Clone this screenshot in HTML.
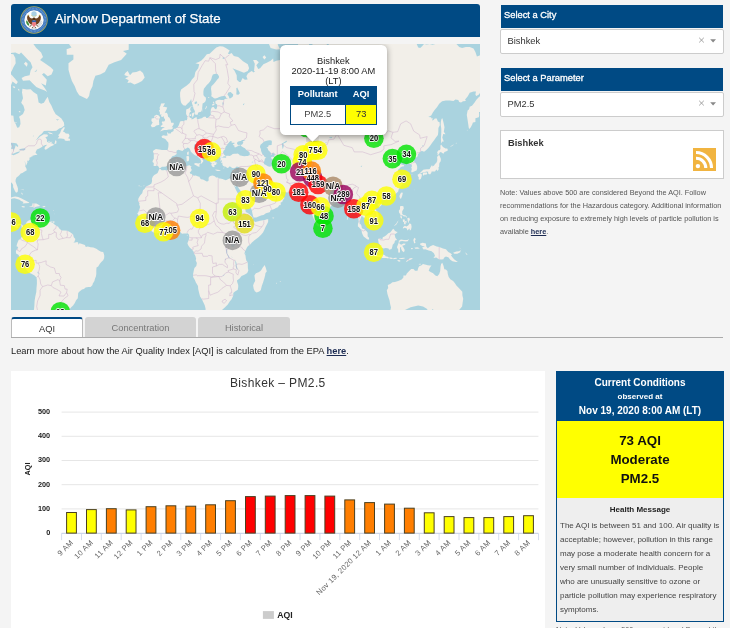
<!DOCTYPE html>
<html>
<head>
<meta charset="utf-8">
<title>AirNow Department of State</title>
<style>
html,body{margin:0;padding:0;}
body{width:730px;height:628px;overflow:hidden;background:#f4f4f4;font-family:"Liberation Sans",sans-serif;color:#333;position:relative;}
.abs{position:absolute;}
#hdr{left:11px;top:4px;width:469px;height:33px;background:#004a84;border-radius:3px 3px 0 0;}
#hdr .t{position:absolute;left:43.7px;top:6.6px;font-size:13.33px;color:#fff;white-space:nowrap;-webkit-text-stroke:0.25px #fff;}
#map{left:11px;top:44px;width:469px;height:266px;background:#aad3df;overflow:hidden;}
.bar{left:500.7px;width:222.7px;height:23.2px;background:#004a84;color:#fff;font-size:9.33px;line-height:21.6px;text-indent:3.3px;-webkit-text-stroke:0.3px #fff;}
.sel{left:500px;width:221.5px;height:22.5px;background:#fff;border:1px solid #ccc;border-radius:2px;font-size:9.33px;line-height:23px;color:#333;}
.sel span{position:absolute;left:6.5px;}
.sel svg{position:absolute;left:197px;top:7px;}
#citybox{left:500px;top:130px;width:221.5px;height:46.5px;background:#fff;border:1px solid #ccc;}
#citybox b{position:absolute;left:7px;top:7px;font-size:9.3px;}
#note{left:500px;top:186px;width:228px;font-size:7.3px;line-height:13px;color:#555;}
.pt{font-size:9.33px;text-align:center;white-space:nowrap;}
#tabs .tab{position:absolute;top:317px;height:20px;font-size:9.3px;line-height:20px;text-align:center;border-radius:3px 3px 0 0;}
#tabline{left:11px;top:337px;width:712px;height:1px;background:#aaa;}
#learn{left:11px;top:345.7px;font-size:9.3px;white-space:nowrap;color:#222;}
#chart{left:11px;top:371px;width:534px;height:257px;background:#fff;}
#cond{left:556px;top:371px;width:166px;height:250px;border:1px solid #004a84;border-top:none;background:#eee;}
#cond .ch{position:absolute;left:0;top:0;width:166px;height:50px;background:#004a84;color:#fff;font-weight:bold;text-align:center;}
#cond .ch div,#cond .cy div{position:absolute;left:0;width:100%;white-space:nowrap;}
#cond .cy{position:absolute;left:0;top:50px;width:166px;height:76.5px;background:#ffff00;color:#111;font-weight:bold;text-align:center;font-size:13.33px;}
#cond .hm{position:absolute;left:0;top:133.6px;width:166px;text-align:center;font-weight:bold;font-size:8px;color:#222;}
#cond .ht{position:absolute;left:3px;top:147.5px;font-size:8px;line-height:14px;color:#444;white-space:nowrap;}
</style>
</head>
<body><div id="wrap" style="position:absolute;left:0;top:0;width:730px;height:628px;overflow:hidden;will-change:transform;">
<div id="hdr" class="abs"><svg class="abs" style="left:8.2px;top:1.4px" width="30" height="30" viewBox="-15 -15 30 30">
<defs><filter id="sb"><feGaussianBlur stdDeviation="0.3"/></filter></defs>
<g filter="url(#sb)">
<circle r="13.7" fill="#a6a860"/>
<circle r="12.9" fill="#3b74bc"/>
<circle r="12.8" fill="none" stroke="#6fa0d8" stroke-width="2.2" stroke-dasharray="0.7 0.9" transform="scale(0.88)"/>
<circle r="9.7" fill="#fdfdfb"/>
<circle cx="0" cy="-6.1" r="2.7" fill="#a9cfe2"/>
<path d="M-1.2 -3.4 L-2.6 -5 M1.2 -3.4 L2.6 -5 M0 -3 L0 -4" stroke="#d8d080" stroke-width="0.7"/>
<path d="M-1 -1.5 C-3.5 -1 -4.8 -3 -5.6 -5.2 C-7.2 -4.2 -7.4 -1 -5.8 1.6 C-5 3 -3.8 4.2 -2.4 4.8 L-1.2 2 Z" fill="#6e4320"/>
<path d="M1 -1.5 C3.5 -1 4.8 -3 5.6 -5.2 C7.2 -4.2 7.4 -1 5.8 1.6 C5 3 3.8 4.2 2.4 4.8 L1.2 2 Z" fill="#6e4320"/>
<path d="M-5.4 -5.6 L-4.6 -4 L-6 -4.2 Z M5.4 -5.6 L4.6 -4 L6 -4.2 Z" fill="#c9b43c"/>
<path d="M-1.4 -1.6 C-1 -2.8 1 -2.8 1.4 -1.6 L1.6 0.6 L-1.6 0.6 Z" fill="#5a3618"/>
<path d="M-2.1 0.4 H2.1 V2.4 H-2.1 Z" fill="#2d5fa8"/>
<path d="M-2.1 2.2 H2.1 V4 C2.1 5.6 0.8 6.4 0 6.9 C-0.8 6.4 -2.1 5.6 -2.1 4 Z" fill="#ee7c82"/>
<path d="M-2.3 5 L-4.4 6.6 M2.3 5 L4.4 6.6 M-1 6.8 L-1.6 8.2 M1 6.8 L1.6 8.2" stroke="#5a3618" stroke-width="0.9"/>
<path d="M-7.6 0.2 C-8.4 2.4 -7.4 4.8 -4.8 6 C-4.6 4 -5.8 1.6 -7.6 0.2 Z" fill="#3f8f3a"/>
<path d="M4.6 6.2 L7.6 1.2 M5.4 6.6 L8.2 2.6 M4 5.6 L6.6 0.6" stroke="#b9b9b9" stroke-width="0.6"/>
<path d="M-3 7.4 C-1.5 8.6 1.5 8.6 3 7.4 L2.6 8.6 C1.2 9.4 -1.2 9.4 -2.6 8.6 Z" fill="#cfcfcf"/>
</g></svg><div class="t">AirNow Department of State</div></div>
<div id="map" class="abs"><svg class="abs" style="left:0;top:0" width="469" height="266" viewBox="0 0 469 266">
<rect width="469" height="266" fill="#aad3df"/>
<g filter="url(#mb)">
<path d="M148.9 124.4L148.2 125.3L146.6 129.1L145.1 130.0L143.2 130.9L141.9 132.5L140.9 134.7L141.1 136.9L140.4 139.4L138.3 140.9L135.0 142.6L133.9 144.5L132.0 146.3L131.2 149.2L129.1 151.5L127.4 154.6L127.1 157.3L128.5 159.1L128.2 160.5L129.1 163.1L128.2 166.1L127.2 168.5L126.3 169.6L127.6 171.5L127.6 173.8L128.7 175.0L130.6 176.9L131.6 177.9L133.5 179.8L134.5 181.7L135.8 183.7L137.7 184.8L139.4 186.2L141.9 187.9L144.9 189.6L148.2 188.7L152.0 188.0L154.3 188.5L155.8 188.9L158.5 187.9L161.5 186.7L164.4 185.9L167.2 185.8L168.4 186.5L169.7 188.5L171.0 189.8L172.9 189.6L175.4 189.4L176.6 189.2L177.9 190.6L178.3 192.7L177.9 195.5L177.3 197.0L176.4 199.3L177.3 201.6L178.7 203.5L180.9 205.6L182.5 207.5L183.0 209.5L184.4 211.9L185.1 214.8L184.7 216.4L185.9 219.1L185.3 222.0L183.4 224.0L182.8 226.5L182.1 229.9L182.1 232.9L183.6 235.5L184.9 238.5L187.0 242.0L187.2 245.1L188.2 249.3L189.1 252.5L190.8 254.9L192.2 258.0L193.7 261.3L194.5 264.2L194.7 267.2L196.9 268.8L200.6 267.9L204.4 266.9L208.4 266.9L211.0 266.0L213.5 263.8L216.8 260.6L218.7 257.5L220.6 255.3L222.3 251.5L222.3 249.1L224.0 247.6L226.8 245.7L227.2 243.0L227.2 241.0L226.3 238.3L225.9 236.5L228.6 234.5L230.5 232.1L233.9 230.5L236.2 228.9L237.3 226.5L236.9 224.0L236.8 220.1L236.6 218.1L235.4 216.8L234.8 214.3L234.5 211.4L233.5 209.8L233.9 207.5L235.0 205.6L236.2 203.1L237.7 201.6L238.8 200.9L240.9 198.6L243.8 195.9L247.2 193.4L250.1 190.8L252.0 188.5L253.5 185.6L254.5 183.1L256.0 180.2L257.1 177.9L257.2 175.3L255.8 175.2L253.9 176.1L252.0 176.3L249.1 176.7L246.3 177.5L244.4 178.1L242.5 176.9L241.9 175.7L242.1 174.2L240.8 172.4L238.3 170.1L236.2 168.7L234.8 167.9L234.3 165.1L232.9 163.1L231.2 161.7L230.5 159.1L230.3 156.7L229.9 155.0L227.8 151.7L227.0 149.8L225.5 147.1L224.4 144.8L223.6 142.8L222.3 140.5L221.6 138.2L222.1 139.4L223.0 141.3L224.8 142.9L225.3 141.3L226.2 139.1L225.9 141.3L226.7 142.6L228.2 145.0L229.7 147.1L230.8 149.8L232.8 151.9L233.9 154.0L234.1 156.0L235.2 158.1L237.1 159.9L238.5 162.1L239.8 164.1L240.9 166.5L241.3 169.1L242.1 172.0L242.5 173.6L244.4 173.6L245.3 173.4L248.2 172.2L250.7 171.3L252.6 171.1L254.9 169.3L257.7 168.5L259.0 167.9L259.2 166.5L261.1 165.7L263.4 165.1L264.9 164.1L266.9 163.3L268.2 161.3L269.7 161.1L269.7 158.5L271.2 158.1L272.0 156.0L273.5 154.1L272.4 153.0L271.2 151.7L268.6 150.9L267.4 149.6L266.9 147.5L267.0 146.0L266.5 146.7L266.1 147.5L264.4 148.8L263.4 150.4L261.7 150.7L259.6 150.5L258.1 150.7L257.3 149.6L257.9 148.2L257.8 146.9L257.1 146.4L256.4 147.7L256.5 149.2L255.8 148.4L255.2 147.1L254.9 145.2L253.3 143.5L252.4 142.0L251.4 140.2L250.8 139.4L251.2 138.3L252.8 137.4L254.1 138.0L255.2 138.3L256.2 140.0L257.5 142.6L259.8 143.7L261.5 145.2L263.4 145.5L265.3 144.8L267.0 144.2L268.2 145.0L268.6 146.9L269.7 147.4L272.0 147.9L274.9 148.2L276.9 148.5L278.5 148.5L280.6 148.3L282.7 148.4L284.8 147.9L286.3 147.8L286.9 149.2L288.0 150.9L288.9 151.5L289.5 151.7L290.9 153.2L292.6 153.2L293.7 153.1L292.6 154.0L291.0 154.3L291.2 155.2L292.9 157.1L294.7 157.7L296.4 157.3L297.1 156.3L297.5 154.6L298.1 155.8L298.1 158.1L298.3 161.1L298.7 163.5L299.4 166.7L300.4 169.1L301.3 171.1L302.2 173.4L303.2 175.7L304.2 177.5L305.0 179.6L305.5 181.0L306.5 182.1L307.3 182.6L308.4 181.7L308.6 180.9L310.1 180.2L310.5 180.2L310.0 179.6L310.9 178.3L311.7 178.2L311.7 175.9L312.6 172.8L312.2 170.7L312.1 168.3L313.3 167.5L314.3 167.3L316.4 166.0L318.3 163.7L320.2 161.9L321.7 160.3L323.4 159.4L325.0 158.3L325.3 156.5L326.9 155.7L327.8 155.8L329.3 155.6L331.0 155.3L332.2 154.2L333.7 153.8L334.6 154.4L335.1 156.7L336.0 158.5L337.5 160.1L338.7 161.4L339.4 163.5L339.2 166.9L340.4 167.5L341.5 167.6L342.9 166.5L344.2 165.2L345.1 166.1L345.7 167.9L346.1 169.9L346.6 172.2L347.5 175.0L347.7 177.5L347.2 179.0L346.9 181.0L346.9 182.5L347.7 182.9L348.8 184.2L350.0 185.6L350.7 186.9L350.9 188.7L351.6 190.6L352.6 192.5L354.3 193.8L355.8 195.0L356.8 195.6L358.1 195.4L358.0 193.8L356.7 192.5L356.6 190.4L356.7 188.8L355.6 187.3L354.3 186.2L353.1 184.9L351.8 184.8L350.9 184.1L350.5 181.9L349.9 180.2L348.7 180.2L348.6 178.1L349.2 176.3L350.0 174.0L350.1 172.4L351.2 172.0L352.0 173.2L353.3 173.7L354.5 174.8L355.6 175.6L356.0 177.1L357.0 177.9L358.5 178.1L359.4 179.0L359.2 181.6L360.2 181.2L361.9 180.0L363.1 178.1L364.0 178.0L365.3 177.4L367.1 176.3L367.7 174.4L367.8 172.0L367.3 169.5L366.9 168.3L365.8 166.9L364.4 165.5L362.9 164.1L362.3 162.7L361.1 161.5L361.1 159.9L362.5 158.5L363.2 157.5L364.8 156.5L366.1 155.8L368.2 155.8L368.8 157.1L368.6 158.5L369.9 158.5L370.1 157.3L369.7 156.5L371.1 156.0L373.0 155.4L374.9 154.8L376.0 153.8L377.2 154.4L378.3 153.6L379.8 153.4L381.5 152.5L383.1 151.5L384.6 149.8L385.9 148.8L387.2 147.5L387.6 145.4L388.8 143.7L389.9 142.0L391.2 140.5L391.8 138.5L390.9 137.6L389.5 137.4L390.7 136.5L391.8 135.8L391.4 134.3L390.1 133.1L389.7 131.3L388.8 128.8L386.9 127.2L387.1 125.8L388.6 124.4L389.7 123.2L391.2 122.5L393.0 122.3L393.2 121.2L391.2 120.8L389.7 120.1L388.2 121.1L386.7 121.7L386.1 120.4L384.4 119.1L383.6 117.7L384.0 116.7L386.1 116.7L387.1 115.2L389.0 113.7L390.5 112.5L392.2 113.2L391.4 115.0L390.9 116.5L390.5 117.7L391.8 117.2L394.3 115.5L396.2 115.1L397.2 115.7L398.3 116.5L398.1 118.2L397.3 119.4L399.1 120.1L400.6 120.6L401.0 122.3L400.2 123.2L400.8 125.1L400.2 127.4L400.8 128.4L402.5 127.7L404.2 127.0L405.5 126.4L406.2 124.4L406.1 122.0L405.3 120.1L404.2 118.4L402.7 116.7L402.5 115.5L403.4 114.7L405.2 113.5L406.7 112.2L406.9 110.2L408.2 108.9L409.0 108.1L410.9 106.8L412.2 107.5L413.5 107.6L415.3 106.1L417.3 103.9L419.1 101.8L421.0 99.1L423.1 96.3L425.0 93.5L426.9 90.9L427.3 87.7L427.4 84.1L428.8 81.3L428.6 78.2L426.9 77.5L425.7 74.6L423.8 74.6L422.5 75.9L421.0 76.6L421.9 74.3L420.6 74.6L420.0 73.3L417.3 73.0L420.2 71.4L421.7 68.7L423.6 65.9L426.3 62.7L428.2 59.8L431.1 57.3L434.9 56.5L438.7 56.5L442.5 56.9L444.4 55.4L447.3 56.1L448.2 58.0L450.1 58.4L452.0 57.3L454.9 56.9L454.1 55.4L456.8 52.3L458.7 48.8L462.5 47.6L465.0 47.6L464.4 50.4L465.2 51.9L467.6 50.8L470.7 46.8L472.0 44.3L473.9 44.8L470.5 48.8L470.9 51.2L468.2 52.7L465.4 55.8L463.6 58.4L461.0 61.7L458.7 62.7L458.1 65.2L456.6 66.6L455.8 71.0L456.6 75.9L457.2 80.1L457.7 83.5L458.2 85.1L459.8 83.2L461.2 80.4L461.9 78.5L464.4 77.9L464.4 74.3L467.8 73.3L468.2 71.4L468.0 68.0L470.5 68.0L469.7 65.2L470.5 62.4L469.2 61.7L471.1 58.0L473.9 54.3L479.6 52.3L487.3 50.4L498.7 42.3L521.5 33.6L521.5 14.0L494.9 9.7L483.5 8.6L479.6 10.8L472.0 10.2L467.3 11.9L465.9 12.4L464.4 8.0L462.5 4.6L458.7 2.9L454.9 2.9L451.1 4.0L448.2 2.9L445.9 0.5L443.4 -1.9L439.6 -5.0L432.0 -6.3L427.4 -8.8L425.9 -4.4L424.4 -0.1L421.5 0.8L418.7 -0.1L415.8 0.5L413.0 -0.1L411.1 2.3L409.2 4.0L407.2 3.5L405.7 -0.1L404.4 -4.4L401.5 -9.5L397.7 -12.8L378.7 -14.1L374.9 -16.2L359.6 -43.4L346.3 -30.9L327.2 -25.5L313.9 -12.8L317.7 -3.1L317.7 5.8L314.9 -1.9L308.2 -5.0L302.5 -6.3L301.5 -0.1L300.0 11.3L300.2 20.2L297.7 26.1L295.8 25.2L298.3 16.7L297.9 5.8L298.3 -6.3L292.0 -9.5L287.2 -1.9L286.9 4.0L287.8 10.8L286.7 14.0L289.7 17.7L283.4 13.0L281.9 11.3L275.8 9.1L274.3 12.4L274.3 15.6L272.0 14.6L269.1 16.1L265.3 16.7L262.5 17.9L262.1 14.6L259.6 16.7L255.8 18.7L252.4 20.2L249.1 24.2L247.2 24.9L245.3 21.2L247.8 18.2L245.3 16.1L242.1 15.9L243.8 19.7L243.0 27.1L244.0 27.3L242.8 28.5L240.6 27.1L236.9 29.4L235.4 32.2L236.6 35.4L233.9 35.8L231.6 34.0L229.5 38.2L232.0 38.0L228.2 38.0L225.9 35.8L225.7 31.3L223.4 26.6L221.5 24.2L225.9 26.1L232.9 28.7L236.8 26.9L238.1 24.2L236.8 20.2L232.0 17.2L227.2 13.0L222.8 11.9L220.6 9.1L218.7 10.0L216.8 9.7L218.7 6.6L214.8 4.0L212.0 2.6L208.7 2.3L205.3 3.5L201.5 6.9L198.7 9.7L195.8 10.2L192.9 14.0L190.1 16.7L187.2 18.2L184.4 19.2L188.2 20.2L187.2 24.2L184.4 28.0L183.4 32.7L180.9 35.4L178.7 38.9L175.8 41.4L172.9 43.5L170.1 45.6L169.1 48.4L169.1 52.3L169.7 56.9L170.3 59.1L172.2 61.3L174.5 61.7L176.4 59.8L178.3 58.0L179.8 56.1L180.0 54.6L180.6 57.6L181.1 59.8L182.1 62.4L179.8 62.6L177.7 64.5L175.2 65.6L175.1 70.0L176.0 71.7L176.4 74.3L175.8 76.3L173.9 76.3L172.9 77.2L171.0 77.1L169.1 77.5L168.6 79.1L167.8 81.3L166.5 83.5L164.4 84.5L162.6 85.0L162.6 87.1L160.0 88.6L159.8 89.5L157.3 89.5L156.9 88.6L156.0 88.6L156.6 91.5L154.5 91.8L152.7 91.2L150.6 92.1L151.0 93.8L153.3 94.6L154.8 95.5L155.8 96.9L157.3 98.5L157.5 100.4L157.3 102.9L156.7 105.8L156.2 106.1L153.9 106.1L151.0 106.1L148.2 105.5L144.9 105.1L142.5 106.6L141.9 107.4L142.8 109.4L142.8 112.2L142.8 114.7L141.7 116.7L141.5 117.9L142.8 118.9L142.6 122.0L144.6 122.0L146.3 121.6L147.4 122.5L148.2 123.9L148.9 124.4ZM-30.9 54.3L-30.9 19.2L-27.1 19.2L-24.2 22.2L-22.7 18.2L-20.0 12.4L-23.3 5.8L-21.4 -1.9L-17.6 1.7L-15.7 8.6L-14.7 11.3L-12.8 16.7L-10.9 14.0L-8.0 18.2L-7.1 22.2L-4.2 19.7L-3.3 13.0L-1.4 9.7L2.4 10.2L4.3 14.0L4.7 19.2L2.4 23.2L0.5 27.6L-3.8 29.0L-5.8 31.3L-7.1 35.8L-11.8 38.4L-16.6 44.3L-19.5 50.4L-20.8 54.3L-20.0 59.1L-17.6 59.1L-16.6 64.1L-11.8 65.2L-8.0 67.6L-3.3 70.7L2.4 71.7L3.0 76.9L4.7 80.1L6.2 83.8L8.2 83.2L9.5 80.1L9.1 75.3L8.0 72.7L12.0 70.0L13.7 65.9L12.5 61.7L10.2 58.7L12.0 54.3L11.0 48.4L11.4 44.8L15.8 45.4L19.6 45.2L22.4 48.0L26.2 50.4L27.2 56.1L27.6 58.4L30.1 59.8L32.9 58.7L34.8 55.4L36.7 52.7L38.3 58.0L40.5 61.7L42.4 66.2L44.7 70.3L48.2 72.7L50.4 74.6L52.9 78.5L53.3 81.6L51.0 83.5L48.2 84.4L45.3 86.8L41.5 86.9L36.7 86.8L32.9 87.1L31.0 89.5L28.2 91.8L25.3 95.8L24.0 96.7L26.2 95.5L29.1 92.4L32.9 90.3L36.3 90.6L37.1 92.1L34.3 93.5L35.8 94.9L36.0 97.7L38.1 98.8L41.5 99.6L42.6 100.4L45.3 99.4L45.5 96.9L44.3 96.3L43.4 100.4L42.4 101.3L39.6 102.6L36.7 104.5L34.8 105.8L33.5 105.0L33.9 102.9L36.2 100.7L34.3 101.0L32.0 102.1L30.1 103.4L28.2 104.5L25.9 105.5L24.9 107.4L24.5 108.9L26.2 110.2L26.2 110.7L24.3 111.0L22.4 111.5L19.6 112.4L22.4 112.5L19.6 113.2L18.4 113.7L18.6 115.5L17.1 117.2L16.0 116.2L16.5 118.2L15.8 120.1L14.8 122.0L14.2 118.4L13.7 116.7L14.1 119.9L14.2 122.3L15.4 124.4L15.8 126.2L13.7 127.4L11.4 129.1L9.7 129.5L8.5 131.1L7.2 132.2L5.5 133.6L4.7 135.4L4.5 137.2L5.3 139.8L6.2 142.0L7.0 144.8L6.8 147.5L5.9 148.5L4.9 148.4L3.8 146.7L3.0 145.0L2.1 143.0L2.1 140.7L0.9 139.1L-0.4 137.9L-2.3 138.8L-4.2 137.4L-7.1 137.4L-9.0 137.4L-10.9 137.8L-10.7 139.8L-12.8 139.8L-15.7 138.9L-19.5 138.9L-22.3 140.7L-25.2 142.8L-25.8 146.7L-26.7 150.9L-26.7 154.4L-25.6 157.5L-23.9 160.3L-21.4 161.9L-19.5 162.5L-16.6 161.9L-14.3 161.7L-13.0 159.5L-12.6 157.1L-9.9 156.3L-7.1 156.0L-5.8 156.5L-6.9 158.7L-7.3 161.1L-8.0 162.3L-8.4 164.1L-9.2 166.5L-9.4 167.5L-7.7 167.4L-5.2 167.5L-3.3 167.3L-1.4 167.5L0.5 168.5L1.1 169.3L0.7 171.1L0.4 173.4L0.1 175.9L0.3 177.3L1.3 178.9L2.8 180.2L4.3 181.2L5.9 180.8L7.8 179.7L9.5 180.0L11.4 181.2L12.2 181.5L13.1 182.5L13.3 181.4L14.8 180.2L15.6 178.3L16.9 176.9L18.2 176.3L20.5 175.9L22.1 175.2L23.6 174.2L24.0 175.4L22.6 176.5L23.2 177.9L24.0 177.1L25.9 175.9L26.2 174.7L27.0 175.9L29.1 177.1L29.7 177.9L32.9 177.7L35.8 178.7L37.7 178.0L40.5 177.5L41.7 177.5L40.2 178.5L42.3 179.2L43.8 180.8L45.3 181.7L47.2 182.7L48.3 184.6L50.6 186.5L53.3 186.6L56.3 186.8L58.8 188.1L60.9 189.4L62.1 190.4L62.8 193.2L64.3 195.0L63.6 197.4L62.4 198.4L64.0 198.6L66.3 198.0L67.2 198.8L67.4 200.7L68.5 199.2L71.0 199.9L73.9 200.9L74.8 203.0L76.7 202.6L79.6 203.3L82.4 203.4L85.3 204.7L88.2 206.8L90.1 207.7L92.2 207.9L92.9 210.0L93.3 211.8L93.1 214.3L92.2 216.2L90.3 218.1L88.7 220.1L87.2 222.4L85.5 223.6L85.3 226.5L85.3 229.9L84.9 232.5L84.0 234.5L83.4 236.9L81.7 239.7L81.5 241.0L79.6 242.9L77.3 243.0L74.6 243.5L72.9 244.9L71.0 245.5L68.5 247.4L67.2 249.1L67.0 251.5L66.8 254.2L65.1 256.2L63.8 259.1L62.1 261.5L60.2 263.3L57.9 266.3L55.8 268.8L52.5 269.0L49.5 267.9L48.2 268.1L51.0 272.3L49.7 276.9L41.5 278.8L35.8 283.8L30.1 308.3L16.7 314.4L18.6 294.2L19.6 281.3L20.2 274.4L21.3 270.4L23.0 265.6L23.4 261.3L23.6 256.9L24.3 252.5L25.3 248.1L25.5 244.1L25.9 240.0L25.9 236.1L25.5 233.5L23.6 231.5L20.9 230.1L17.7 228.5L15.6 226.3L14.2 224.5L12.7 221.2L11.4 218.7L10.1 215.8L8.5 212.9L7.4 210.8L5.1 209.5L4.9 207.0L6.4 204.7L7.2 203.0L5.5 202.2L6.1 199.7L7.0 197.6L7.6 196.1L9.5 195.0L10.4 193.2L12.0 193.0L12.5 190.8L12.2 188.5L12.2 185.6L11.2 184.2L10.4 182.9L10.8 181.9L10.1 181.0L8.2 181.0L6.8 182.3L7.2 183.8L5.7 184.2L4.2 183.1L2.2 182.3L0.5 181.7L0.2 180.6L-1.8 179.6L-2.9 178.9L-3.8 177.1L-5.6 175.0L-7.1 173.0L-9.0 172.6L-11.8 171.6L-15.7 170.1L-19.5 166.7L-23.3 167.7L-30.9 165.1ZM76.0 55.0L72.9 53.5L68.2 51.2L65.7 47.2L63.8 42.3L60.9 37.1L59.0 31.3L57.5 25.7L57.5 19.2L62.4 15.6L62.4 10.8L55.8 10.8L55.6 5.2L60.5 3.5L55.8 -3.1L52.9 -12.8L49.1 -27.0L102.4 -67.9L125.3 -30.9L118.6 -16.2L117.7 -5.0L112.9 -4.4L117.7 -0.1L117.7 5.8L112.0 6.9L115.8 9.7L110.1 16.1L103.4 18.2L97.7 20.7L93.9 28.0L89.1 30.4L84.4 31.8L82.4 37.1L81.5 42.3L79.0 47.2L78.1 51.9ZM36.2 48.0L33.9 46.4L29.1 44.8L25.3 43.1L21.5 39.3L18.6 36.2L12.0 36.7L10.6 34.0L13.9 32.2L18.6 31.3L19.6 26.6L21.5 23.2L19.6 18.2L16.7 15.6L13.9 12.4L10.1 8.6L8.2 10.2L4.3 8.6L-0.4 9.1L-3.3 8.6L-7.1 6.9L-10.9 1.7L-9.9 -9.5L-2.3 -14.8L5.3 -12.8L11.0 -9.5L14.8 -6.3L17.7 -1.9L22.4 -0.1L25.3 4.0L30.1 8.6L32.0 13.0L29.1 16.1L33.9 19.2L39.6 23.2L42.4 26.1L40.5 30.4L36.7 32.2L32.9 29.0L31.0 30.4L35.8 35.8L34.8 41.4L30.1 39.3L33.9 44.3ZM376.8 241.0L377.2 244.1L375.8 246.2L376.4 249.7L377.2 252.5L378.5 256.2L379.2 260.2L380.0 263.5L379.1 267.4L384.4 269.3L392.0 266.9L399.6 263.3L407.2 261.5L412.0 262.4L415.8 264.7L418.3 268.8L422.1 264.7L422.5 270.4L426.3 275.2L437.7 278.8L447.3 266.9L451.1 262.4L452.2 254.7L451.4 251.5L451.3 247.8L448.8 245.1L446.9 243.0L445.4 241.4L443.8 238.9L442.1 236.9L439.3 235.3L437.7 232.9L436.8 229.9L436.4 226.9L434.9 225.5L433.3 225.3L432.6 222.0L431.3 218.7L430.1 220.1L429.5 223.0L429.2 226.9L428.2 229.9L426.3 232.3L424.4 231.5L422.1 229.3L419.6 227.9L417.7 226.7L418.7 224.0L420.4 221.6L418.7 221.6L416.8 221.2L413.9 220.6L412.0 219.9L410.1 221.4L408.2 222.2L407.2 224.0L406.5 226.7L404.0 226.7L402.5 224.9L400.2 225.1L397.7 227.5L395.8 229.5L394.9 231.5L392.4 231.5L392.4 233.5L390.7 235.5L387.2 236.9L384.0 238.1L381.5 238.3L379.2 240.0Z" fill="#f2efe9"/>
<path d="M148.4 124.6L149.4 124.1L151.0 122.7L152.9 122.7L155.4 122.6L156.4 121.3L158.3 120.6L159.0 118.7L160.0 117.7L159.0 116.0L160.2 113.7L161.3 112.2L163.6 111.5L165.7 109.9L165.5 108.4L165.5 106.8L167.2 105.8L169.1 106.2L171.4 107.0L173.3 105.3L175.2 104.5L176.6 103.4L178.3 104.2L179.2 105.8L179.8 107.4L180.9 108.7L182.1 109.7L183.2 110.7L184.4 111.6L185.9 111.7L186.8 112.7L188.0 114.0L189.3 114.7L189.7 116.0L190.3 117.7L189.7 119.1L189.4 119.8L190.3 119.8L191.2 118.7L192.2 117.4L192.2 116.2L191.2 115.5L191.8 113.7L193.7 114.0L193.9 115.0L194.7 115.2L194.8 114.0L193.9 113.1L192.0 112.0L190.1 111.0L190.1 109.8L188.4 109.9L187.2 108.9L186.3 107.6L185.5 105.8L184.4 104.7L183.2 103.9L183.0 101.8L183.2 100.7L184.6 99.9L185.7 99.9L185.5 101.5L186.1 102.3L186.8 101.0L188.0 101.8L188.6 103.7L190.1 105.8L192.0 106.8L193.3 107.6L194.8 108.7L196.0 109.7L196.7 111.0L196.6 113.2L197.5 115.2L198.7 117.0L199.8 118.7L201.1 118.9L203.2 119.6L203.2 119.9L201.1 119.1L200.2 120.1L200.7 121.8L201.3 122.5L202.3 123.2L203.0 123.0L203.6 123.2L203.2 121.3L204.4 121.0L205.3 120.4L205.3 119.1L204.2 118.4L203.2 116.5L203.0 114.7L204.0 114.2L205.1 114.9L206.1 114.2L204.9 113.0L206.8 112.6L209.1 112.7L209.5 114.0L210.5 113.7L211.6 113.6L214.7 113.7L215.4 112.9L214.8 112.2L212.9 112.2L211.8 113.0L210.5 113.5L209.5 114.6L209.5 116.0L210.7 116.2L210.7 117.7L209.9 118.9L211.4 118.7L211.4 120.4L212.0 121.8L213.3 122.5L215.0 122.7L216.0 123.9L217.5 123.7L218.1 122.4L219.6 122.7L221.1 123.9L222.5 124.2L224.4 123.7L225.7 122.5L227.4 123.0L228.6 122.7L228.0 124.4L228.0 126.3L228.0 127.9L227.2 129.3L226.5 131.3L226.1 133.1L225.3 134.7L224.8 135.2L223.4 135.6L221.5 135.6L220.9 135.2L220.0 134.7L218.7 134.5L217.3 134.9L216.0 135.8L214.8 136.2L212.7 135.6L211.6 134.9L209.1 134.5L207.6 134.5L207.0 133.6L205.1 133.4L203.8 132.2L201.7 131.5L200.2 131.8L198.8 132.2L197.7 133.6L197.5 135.4L197.9 136.1L196.9 137.2L195.8 137.4L193.9 136.5L192.0 135.6L190.1 135.2L188.9 134.0L188.6 132.7L187.2 132.5L184.7 131.6L183.0 131.7L181.5 131.0L180.6 130.0L179.0 129.5L178.8 128.4L180.4 126.7L180.7 125.6L180.0 124.4L179.8 123.2L180.7 122.0L179.6 122.2L179.0 121.4L178.3 121.2L176.7 121.8L174.8 122.3L172.9 122.0L171.4 122.0L169.5 122.7L167.2 122.3L165.3 122.5L163.4 123.0L161.5 123.2L159.6 124.6L157.7 125.1L155.8 126.5L153.9 126.0L152.2 126.3L150.6 126.3L149.5 125.1L148.4 125.0ZM214.8 112.0L213.1 110.7L212.9 109.7L212.0 108.4L212.7 106.6L214.1 105.8L214.1 104.5L214.7 102.6L216.2 101.3L216.2 100.2L217.1 99.4L218.3 98.0L219.6 97.1L220.6 97.4L221.3 97.7L220.4 98.3L220.9 98.8L223.4 98.8L223.6 99.4L222.1 100.2L221.7 101.0L223.4 101.5L223.4 103.0L224.0 103.4L225.1 103.0L226.7 102.2L227.0 101.7L228.9 101.5L229.3 100.7L227.2 100.9L226.3 100.2L225.9 99.1L226.8 97.7L228.2 97.3L229.7 97.0L231.2 96.0L232.6 95.9L234.5 95.8L234.1 96.3L232.6 97.1L231.6 97.4L232.4 98.8L231.8 99.4L231.2 100.4L229.7 101.0L229.7 101.5L230.8 102.6L232.4 103.4L233.9 104.2L235.2 105.8L236.4 106.8L237.7 107.4L238.7 108.7L238.8 109.9L238.7 111.0L236.8 112.0L235.2 112.1L233.5 112.2L231.6 112.0L229.9 111.5L228.9 111.5L228.2 110.4L226.7 109.6L225.3 109.8L223.4 109.7L221.7 110.1L220.2 111.2L218.7 112.0L217.1 111.7L216.0 111.7ZM252.9 97.7L251.0 99.4L249.5 100.7L248.9 102.9L249.9 105.0L250.1 107.1L251.2 109.7L252.6 111.2L253.7 113.0L255.4 113.7L253.9 114.5L253.5 116.5L252.9 118.2L252.9 120.1L254.9 121.1L256.8 122.3L258.7 122.7L260.6 122.3L262.3 122.3L262.4 121.1L262.1 119.6L262.1 117.2L261.1 116.2L261.7 115.0L260.4 114.7L260.2 113.0L261.1 112.7L262.5 113.0L263.4 112.2L262.5 110.7L260.4 110.7L259.6 111.2L260.2 109.2L258.7 107.4L257.3 106.3L256.6 104.2L255.4 103.5L257.1 102.9L257.7 101.3L260.6 101.0L260.9 97.7L260.4 96.5L258.5 96.3L256.8 96.6L254.9 97.1ZM260.6 109.9L261.3 111.7L263.2 112.0L264.0 110.7L262.9 109.2L261.3 109.2ZM180.0 62.7L182.1 62.6L182.5 64.5L183.6 66.6L184.0 68.0L183.6 68.7L184.2 70.0L184.2 70.7L185.1 70.8L186.7 70.7L186.8 69.7L187.6 68.3L189.5 68.1L190.3 67.3L190.8 66.2L191.2 63.4L191.4 61.7L191.6 59.5L193.1 58.7L194.5 57.3L195.0 55.4L194.8 53.5L192.9 51.9L192.4 50.4L192.4 47.2L192.9 44.8L194.3 43.1L195.8 41.0L197.7 39.3L199.4 37.1L200.4 34.9L200.9 32.7L201.9 30.4L204.4 29.7L206.5 29.9L208.0 32.2L207.8 34.0L206.3 35.6L204.4 38.0L202.5 40.2L200.4 42.3L200.0 44.8L200.4 47.6L200.6 50.4L200.2 52.3L201.5 52.9L203.0 54.3L204.0 54.6L206.3 53.9L208.2 53.1L210.7 52.3L212.9 51.9L214.3 52.1L215.2 53.7L217.1 54.4L216.2 54.6L213.9 55.0L212.9 56.0L210.7 56.1L208.4 55.8L206.7 56.1L204.4 57.1L204.4 58.7L204.7 59.8L206.1 60.4L206.1 62.0L205.9 64.1L205.1 65.2L204.0 65.0L202.7 62.9L200.9 63.3L199.8 65.6L199.6 68.7L199.8 70.7L198.7 72.2L197.5 73.3L196.6 74.0L195.2 74.0L194.8 72.8L192.9 72.8L190.7 74.2L187.6 75.1L186.7 75.6L185.7 74.6L185.3 73.3L183.4 74.0L182.1 75.0L180.7 75.3L180.2 75.3L180.7 74.0L178.7 73.7L178.7 72.7L177.7 72.0L178.3 70.3L178.5 69.0L179.2 68.0L180.4 67.3L179.2 66.2L179.2 65.2L179.6 63.4ZM218.5 54.4L219.6 54.3L221.7 52.7L222.3 50.4L219.6 48.0L217.3 48.4L216.4 50.4L217.7 52.3ZM225.3 50.4L227.4 50.8L228.9 49.2L227.4 46.0L226.3 43.5L225.3 44.3L225.5 47.2ZM357.1 82.9L359.2 83.5L361.5 81.9L364.4 79.8L366.7 77.2L368.6 74.6L369.0 71.0L368.2 69.3L367.2 70.7L366.5 74.3L364.4 77.5L362.5 79.4L360.6 81.6L358.7 82.2ZM299.6 101.0L301.0 99.1L303.4 97.1L307.2 97.4L310.5 98.0L309.9 98.8L307.2 98.3L304.4 98.0L302.5 99.4L301.0 101.8ZM270.7 99.4L271.2 103.1L271.8 105.3L272.8 102.1L272.4 99.6L274.9 98.5L276.2 97.1L275.4 96.7L273.5 98.0L271.8 99.1ZM220.0 198.8L221.1 197.6L223.4 197.4L224.8 198.4L224.4 199.9L223.4 201.8L222.5 203.0L220.6 202.8L220.0 200.9ZM215.4 204.5L216.2 206.6L216.2 209.5L217.9 212.3L218.8 214.6L217.9 214.3L216.6 211.4L215.2 208.5L215.0 205.6ZM224.4 216.4L225.5 219.1L225.7 222.0L226.7 225.3L225.9 225.5L224.9 223.0L224.6 220.1L224.2 217.1ZM-1.8 99.4L0.5 98.8L3.4 99.1L5.7 99.6L7.4 102.1L6.4 103.1L4.7 101.3L4.0 103.7L2.6 107.1L2.2 105.0L0.7 104.7L-0.2 105.5L0.7 102.1L-0.4 100.4ZM0.7 110.4L2.4 111.2L4.9 110.2L7.6 108.9L9.3 107.5L8.2 107.5L6.2 108.1L3.8 108.9L2.1 109.7L1.1 109.4ZM7.6 106.3L10.1 106.2L12.9 106.4L14.4 105.5L14.1 104.2L12.0 104.6L9.1 105.0ZM-7.7 109.7L-5.2 109.2L-4.8 105.8L-4.6 102.6L-2.3 99.9L-3.5 101.8L-6.1 99.9L-8.0 102.9L-7.7 106.3ZM-15.7 97.1L-11.8 97.4L-8.0 96.3L-5.2 97.7L-1.9 97.7L-1.8 94.9L-4.2 91.5L-9.0 92.1L-10.9 93.5L-12.8 94.9ZM21.7 92.4L22.8 91.5L23.2 92.1ZM23.4 28.0L26.2 25.2L25.3 27.6ZM44.9 75.3L48.2 75.6L46.3 76.6ZM228.2 189.6L228.8 191.3L229.3 193.0L228.6 191.9ZM304.8 108.7L306.9 107.9L308.8 108.1L306.7 109.2ZM240.4 118.2L242.1 117.4L242.3 118.4ZM245.7 119.4L246.5 120.6L247.0 121.3L246.3 121.6ZM349.5 122.0L351.2 121.8L350.5 123.0ZM411.1 101.8L412.4 101.0L412.2 102.9ZM231.8 60.6L233.5 59.1L232.8 61.3ZM211.6 58.0L212.7 59.1L212.0 61.7L211.4 59.8ZM183.2 59.1L185.3 56.9L186.3 59.1L184.4 60.2ZM186.8 59.5L188.0 60.6L186.8 62.4ZM211.0 14.0L213.5 13.0L212.9 15.1ZM350.7 82.6L351.4 84.7L350.9 85.9ZM318.1 93.5L320.6 92.9L321.3 94.1L318.9 94.3ZM314.3 98.3L315.8 98.5L315.0 99.4ZM211.0 232.3L214.3 230.1L212.7 231.7ZM213.9 215.2L215.0 214.4L214.5 216.2ZM217.5 195.7L219.2 193.8L218.8 195.1ZM214.8 201.2L215.4 202.6L214.7 202.4ZM220.2 212.5L221.7 214.1L221.1 213.1ZM26.2 227.5L28.2 229.3L27.0 229.7ZM159.0 182.3L160.2 184.6L159.8 186.0L158.6 184.1ZM230.3 174.4L231.2 175.2L230.5 175.7Z" fill="#aad3df"/>
<path d="M148.7 87.5L151.6 86.6L153.1 85.9L155.8 85.9L157.7 85.4L160.2 85.4L161.5 84.7L162.3 83.6L160.7 83.3L161.5 82.2L162.8 80.1L162.5 78.8L160.2 78.8L159.8 76.9L159.2 75.3L158.5 73.7L157.1 72.7L156.6 70.0L155.6 68.8L153.7 68.7L154.6 67.3L155.6 65.2L156.2 63.4L153.3 62.7L152.0 63.1L153.1 60.9L153.9 59.3L150.1 59.5L149.5 61.7L148.6 63.4L148.9 65.9L147.8 66.6L148.9 68.3L148.9 70.7L150.5 70.3L149.9 72.3L151.2 73.0L152.9 72.3L152.9 74.3L154.1 75.0L153.8 76.9L152.9 77.4L151.0 77.4L150.8 79.0L151.8 80.1L150.8 81.3L149.5 81.9L150.1 82.9L152.0 83.0L153.9 83.8L151.6 84.2L150.1 86.2ZM148.2 81.0L147.6 81.0L145.3 81.6L143.4 82.9L140.9 83.3L139.8 81.6L140.9 79.8L141.7 78.5L140.4 76.9L140.7 74.6L143.4 74.0L143.2 72.0L145.5 70.8L147.8 71.4L149.1 73.3L148.2 75.3L148.0 77.2L148.2 78.8ZM116.4 38.9L119.6 38.6L123.4 40.6L127.2 39.1L131.0 36.9L133.7 33.6L132.0 29.0L129.1 26.6L125.3 28.0L121.5 28.5L119.0 31.3L116.7 26.9L114.3 29.0L113.3 31.1L117.7 32.7L114.1 34.2L117.7 36.2ZM183.2 119.6L184.9 119.1L187.2 119.5L189.2 119.0L188.4 121.1L188.6 122.7L187.0 122.6L185.3 121.6L183.4 120.6ZM175.2 112.5L177.1 111.7L178.1 112.7L178.1 115.0L177.7 117.0L176.7 117.2L175.8 117.4L175.6 116.0L175.6 114.0ZM176.0 108.7L177.4 107.2L177.8 108.7L177.5 110.7L177.1 111.2L176.2 110.4ZM204.4 125.6L206.3 125.7L208.2 125.9L209.7 126.2L209.1 126.7L206.8 127.0L204.6 126.3ZM221.1 126.7L222.3 126.0L223.8 125.8L225.5 125.1L224.4 126.7L223.6 127.1L222.5 127.7L221.3 127.3ZM203.8 117.4L205.3 118.2L206.5 119.4L205.7 119.4L204.4 118.4ZM164.2 115.7L165.5 114.9L166.2 115.5L165.5 116.5L164.6 116.2ZM212.4 124.1L213.3 123.3L213.1 124.4L212.6 124.6ZM208.9 116.7L209.9 116.3L210.3 117.1L209.3 117.2ZM180.9 71.4L180.7 69.7L182.1 68.8L183.6 68.5L183.4 70.0L182.8 71.0L182.5 72.3L181.5 72.7ZM178.3 71.0L179.2 70.0L180.2 71.0L180.0 71.9L178.8 71.9ZM180.6 72.7L182.1 72.7L182.1 73.3L180.9 73.2ZM194.1 64.9L195.4 62.0L196.0 62.4L195.4 64.1L194.5 65.2ZM190.8 68.0L191.8 64.5L192.2 64.1L191.2 67.6ZM201.1 60.6L202.5 59.5L204.0 59.8L203.0 60.9L201.5 61.7ZM201.7 58.4L202.7 57.6L203.4 58.4L202.5 58.9ZM187.6 71.7L188.4 71.4L188.4 72.0ZM184.6 73.7L185.5 73.2L185.7 74.3L184.7 74.3ZM196.9 53.5L198.3 52.9L198.1 54.1L197.3 54.1ZM253.5 221.0L254.7 223.4L255.8 227.5L254.5 228.9L254.1 231.5L253.3 234.5L252.2 237.9L250.8 242.0L249.7 246.2L248.2 247.6L245.7 248.5L243.8 247.2L242.7 244.7L242.1 241.6L243.0 238.9L244.2 236.9L243.8 234.1L243.4 231.5L244.9 229.3L247.6 228.3L249.5 226.9L250.8 225.3L251.6 223.8L252.8 222.2ZM311.8 179.2L312.6 179.8L314.3 181.7L315.5 183.9L315.2 185.8L313.9 186.4L313.0 186.7L312.0 186.0L311.6 184.1L311.6 182.3L312.0 180.8ZM264.8 238.9L265.5 238.7L265.9 239.3L265.3 239.7ZM268.9 237.3L269.5 236.9L269.7 237.7L268.9 237.9ZM261.1 173.8L262.5 173.6L263.4 174.0L262.1 174.4ZM241.9 220.1L242.5 220.3L242.3 220.8ZM234.3 209.1L234.6 209.6L234.8 210.2L234.5 210.2ZM127.4 141.8L128.7 141.3L128.2 142.4ZM129.5 142.2L130.3 142.2L130.1 142.9ZM132.4 142.0L133.3 140.9L133.1 142.0L132.4 142.3ZM175.8 190.9L176.6 190.9L176.2 191.9ZM409.0 129.1L409.9 128.1L411.1 127.0L412.2 125.8L413.9 125.5L415.8 125.2L417.7 125.3L418.7 125.1L419.1 123.9L420.0 122.5L421.2 120.8L421.2 122.5L423.1 121.6L424.0 120.1L425.2 119.1L426.1 117.2L426.3 115.2L426.1 113.2L426.9 111.7L428.2 111.0L429.2 113.2L429.9 115.0L429.7 117.2L428.4 118.9L428.2 120.4L428.2 122.3L427.4 123.7L427.8 125.1L427.1 126.3L426.1 127.0L425.9 125.6L424.8 126.3L424.0 127.6L423.1 127.6L421.5 127.6L420.6 127.6L420.4 128.4L419.3 130.2L418.3 130.3L417.0 129.3L417.2 127.7L415.4 127.4L413.5 128.2L411.6 128.6L410.5 129.1ZM409.0 129.3L410.5 130.0L410.9 131.6L409.9 134.7L408.6 135.8L407.6 135.2L407.8 133.4L406.9 132.0L406.7 130.7L407.8 130.0ZM412.0 129.1L414.1 128.4L416.0 128.6L416.2 129.5L415.3 130.7L413.5 130.4L412.8 131.8L411.8 130.7ZM426.3 111.0L428.0 110.3L428.6 108.4L429.9 108.1L432.4 109.7L433.5 107.9L435.4 107.2L437.0 106.2L436.2 104.5L434.5 104.5L432.0 102.9L430.1 100.6L429.4 101.8L429.5 104.5L429.0 106.1L427.1 106.6L426.1 108.4L426.7 109.4ZM430.1 99.4L431.4 97.4L432.8 97.4L432.0 95.5L431.3 93.5L432.2 90.0L434.5 90.3L432.8 87.7L433.5 83.2L432.6 79.1L432.0 76.6L431.4 74.2L430.5 75.0L429.9 77.5L429.7 80.7L430.3 84.7L430.3 88.3L430.1 91.8L429.9 94.9L430.1 97.1ZM390.1 148.8L391.2 148.4L391.8 149.0L391.1 151.9L389.9 155.0L388.8 153.8L388.4 151.9L389.3 150.0ZM366.7 160.5L368.2 159.2L370.3 159.0L371.1 159.9L369.9 161.7L368.4 162.7L366.7 162.1ZM389.3 162.1L391.1 162.1L392.4 162.3L392.8 164.5L391.2 167.3L391.2 169.9L392.6 170.9L394.7 171.5L396.0 173.0L395.8 173.8L394.3 172.2L393.0 172.4L391.4 171.3L389.3 171.5L389.3 170.1L388.2 169.1L387.8 166.7L389.0 165.3L389.0 163.5ZM391.8 184.6L392.2 182.9L393.9 181.7L395.4 182.5L397.2 181.4L398.7 179.2L400.2 180.2L400.6 183.1L400.0 185.8L398.9 186.4L398.5 184.6L396.4 186.4L395.8 184.6L393.9 183.7ZM396.4 174.0L398.3 173.8L399.1 176.3L397.7 176.7L398.1 178.7L397.3 178.5L396.6 176.3ZM392.8 179.0L393.7 176.9L394.9 177.1L394.5 180.2L393.7 180.6ZM391.8 175.2L394.1 175.7L393.2 177.7L392.0 177.9ZM394.7 179.8L395.8 176.5L396.0 177.7ZM389.0 172.2L390.9 172.2L391.1 174.2L390.1 174.6ZM382.9 181.9L385.3 179.6L387.4 176.3L386.9 178.1L385.2 180.8L383.6 181.7ZM360.0 211.0L361.5 209.3L363.4 209.4L365.9 210.0L366.9 211.0L369.9 211.3L371.1 210.3L374.1 211.2L374.5 212.3L376.8 212.7L377.7 213.3L377.5 214.6L375.2 213.9L372.0 213.9L369.1 213.3L366.3 212.9L364.4 212.7L362.3 212.1L360.6 211.2ZM367.2 195.1L368.4 194.2L369.7 194.8L371.4 195.3L371.8 193.2L373.9 192.3L375.8 190.8L377.3 189.2L379.2 188.5L380.8 186.5L382.1 184.8L383.1 185.4L383.8 186.7L385.5 187.7L386.7 188.1L385.0 189.6L383.6 190.2L384.0 192.3L384.4 193.8L386.1 196.1L384.0 196.5L383.4 199.0L381.7 200.7L381.3 202.8L380.6 204.9L378.1 205.8L377.5 204.5L374.9 204.1L372.6 204.5L369.7 203.5L369.1 200.9L367.6 199.1L367.4 197.2L367.1 196.1ZM387.8 196.7L389.9 195.5L393.0 196.1L396.4 195.9L398.1 195.0L396.8 197.2L394.5 197.4L391.1 197.0L388.8 197.4L388.2 199.3L390.1 200.7L392.6 199.5L394.7 199.7L393.7 201.0L391.2 201.8L392.6 203.7L393.7 206.0L393.0 208.3L391.2 207.0L390.1 204.7L390.1 203.1L389.0 203.5L389.0 205.6L389.0 208.5L387.2 208.5L387.2 205.6L385.9 203.3L386.9 200.7L387.8 198.2ZM402.3 196.1L403.4 193.8L404.8 195.1L403.8 197.0L404.6 198.6L403.2 199.5L402.7 197.4ZM409.2 199.5L411.8 198.8L414.9 199.5L415.3 202.4L416.8 204.3L419.3 202.2L422.1 200.9L425.7 202.4L428.2 203.0L432.0 204.5L434.9 205.2L437.3 208.1L439.6 209.3L441.2 210.8L439.8 211.0L441.2 213.1L443.1 215.2L445.4 217.1L446.9 217.9L445.0 218.1L441.5 217.3L439.3 215.8L437.3 213.3L434.9 212.5L433.0 213.7L432.4 215.2L430.1 215.4L427.8 215.2L425.3 213.5L422.5 213.9L424.0 211.8L422.9 209.3L420.6 207.3L417.7 206.4L414.3 205.2L412.6 205.6L411.1 203.5L413.9 202.6L411.4 202.0L409.2 200.7ZM442.1 208.7L445.4 207.5L448.2 207.3L449.7 206.0L449.2 208.3L446.3 209.8L443.4 209.8ZM446.9 203.0L449.2 204.3L451.1 206.6L450.3 205.4L448.2 203.7ZM454.1 208.3L455.8 209.8L456.6 211.0L455.3 210.4ZM394.9 217.7L396.8 215.6L399.2 214.3L401.9 214.1L400.6 215.2L397.7 216.6L395.8 217.7ZM388.0 214.3L390.1 214.1L393.5 213.7L393.7 214.4L391.1 215.0L388.2 214.8ZM382.1 214.3L384.4 213.7L386.3 214.1L385.3 214.8L382.5 215.2ZM377.7 213.7L379.6 213.5L381.7 213.9L381.5 215.0L379.1 214.8ZM386.3 216.2L388.2 216.0L389.7 217.1L388.2 217.7L386.7 217.0ZM403.4 203.7L406.3 203.3L408.8 204.3L407.2 204.7L404.4 204.7ZM399.8 204.1L401.5 203.9L401.9 204.9L400.6 205.2ZM407.6 220.1L409.7 219.7L409.9 220.4L408.2 220.6ZM437.0 103.7L438.7 103.1L441.5 101.0L443.1 100.4L440.6 102.3ZM444.4 99.6L446.3 98.5L445.4 99.4ZM455.8 87.1L457.0 85.6L456.2 87.1ZM400.0 130.7L401.3 130.2L401.2 130.7ZM402.9 146.5L404.0 145.0L403.4 146.0ZM336.2 172.0L336.8 173.0L336.6 175.7L335.8 175.4L336.2 173.6ZM257.7 -0.7L259.6 4.0L265.3 5.5L269.1 5.2L267.2 1.7L265.3 -4.4L267.2 -11.4L273.9 -23.3L289.1 -37.4L277.7 -33.3L266.3 -23.3L260.6 -9.5L260.6 -3.1ZM271.0 6.3L273.5 8.0L274.7 9.7L272.4 10.2ZM251.6 13.0L253.5 11.3L255.2 13.5L253.3 15.6ZM-6.1 39.7L-3.7 41.4L-0.4 42.3L1.5 37.6L5.3 40.2L6.8 38.0L4.3 34.9L0.5 30.8L-2.7 29.9L-4.2 33.6L-5.2 36.7ZM1.5 42.7L3.4 44.3L4.3 43.1L2.8 42.3ZM6.8 44.8L8.2 47.6L8.3 45.2ZM7.6 66.9L9.1 68.7L9.3 66.9ZM3.4 78.2L5.3 79.1L5.7 78.2ZM12.9 19.7L15.8 22.7L16.7 19.7L14.8 17.7ZM46.6 94.6L48.2 92.6L47.2 91.2L49.1 88.9L50.4 85.6L52.9 82.9L53.9 83.8L52.0 87.7L53.3 88.0L54.8 89.5L57.7 89.7L58.6 92.1L57.1 94.3L59.2 94.9L58.4 97.3L57.1 96.6L56.3 96.9L53.9 96.6L53.3 94.9L50.1 94.6ZM36.7 88.0L40.5 88.9L42.1 90.3L38.6 89.7ZM37.1 97.1L39.6 98.0L41.5 97.8L40.0 99.1L37.7 98.0ZM-2.1 155.3L-0.4 153.8L1.5 153.0L4.3 152.6L7.2 153.1L10.1 154.2L12.9 155.8L15.4 156.9L18.1 158.5L18.1 159.0L14.8 159.2L11.6 159.4L12.5 157.9L10.1 157.1L8.5 155.8L6.2 154.9L3.4 154.2L1.5 154.6L-0.2 155.0ZM17.8 162.4L20.5 161.9L21.7 161.1L20.9 159.7L23.0 159.4L25.3 159.5L27.2 160.5L29.3 161.9L28.2 162.3L26.2 162.5L24.3 163.1L23.2 163.7L21.5 162.7L19.6 162.7ZM10.3 162.4L12.0 162.1L14.1 162.8L13.3 163.4L11.4 163.3ZM31.6 162.2L33.9 162.1L34.5 162.7L32.9 163.2L31.6 163.1ZM41.7 177.5L43.4 177.3L43.4 178.7L41.7 178.7ZM10.6 148.6L11.4 149.2L11.6 150.9L10.4 149.8ZM9.1 145.2L11.0 145.2L12.5 145.6L12.9 146.3L11.0 145.5ZM41.9 166.5L42.8 166.3L42.4 167.1ZM43.0 169.5L43.6 169.9L43.4 170.3ZM5.3 -13.4L12.9 -12.8L14.2 -8.8L9.1 -7.5Z" fill="#f2efe9"/>
</g>
<path d="M12.2 181.5L12.5 182.9L11.2 184.2M23.6 174.2L21.9 176.7L20.5 180.2L21.7 181.9L22.4 184.6L26.1 184.6L31.0 186.2L30.4 189.4L31.4 193.6L32.2 195.7M32.2 195.7L37.7 194.4L37.7 190.4L40.0 190.4L44.0 188.1L45.3 188.5L45.3 192.9L47.6 195.5L52.0 194.4L55.6 193.6L59.2 193.8L61.1 190.4M44.0 188.1L42.6 186.7L43.2 185.2L44.7 184.6L45.3 181.7M50.6 186.5L50.4 188.1L49.1 190.4L52.0 194.4M56.3 186.8L56.0 189.0L56.7 191.3L55.6 193.6M32.2 195.7L26.6 195.9L26.2 198.4L27.2 199.9L26.4 206.0L24.9 206.0L20.7 207.9L18.8 210.4L18.6 212.3L20.5 215.6L22.1 217.1L25.1 216.2L25.1 219.1L27.0 219.0M26.4 206.0L25.7 205.2L22.4 202.6L19.2 200.5L16.2 198.2L14.2 197.2L12.0 196.7L9.5 195.3M16.2 198.2L16.0 199.7L13.7 203.0L10.6 204.7L9.1 207.5L6.6 206.4L6.6 204.5M27.0 219.0L28.7 222.2L28.2 225.9L27.4 228.1L28.2 229.9L27.2 231.9L25.5 233.5M27.0 219.0L30.1 218.5L35.2 216.8L35.0 220.4L39.6 223.0L43.4 224.0L44.9 229.5L48.3 229.5L48.7 231.5L50.1 233.3L48.7 236.5L48.7 237.3M27.2 231.9L29.1 235.9L29.7 240.0L31.6 242.6L29.1 246.2L29.1 251.5L26.6 256.9L25.7 262.4L26.6 266.9M31.6 242.6L36.7 241.0L40.3 241.6L41.9 243.5L45.3 245.1L49.1 247.2L49.9 248.1L48.0 251.9L52.9 252.1L55.6 248.5M40.3 241.6L41.5 237.9L47.2 235.5L48.7 237.3L49.3 241.2L53.3 241.6L54.1 245.1L56.2 245.1L55.6 248.5M55.6 248.5L57.1 251.7L53.3 254.5L49.9 258.4L48.7 263.5L48.3 266.9M49.9 258.4L52.9 259.9L55.8 261.7L57.9 264.0L57.9 266.3M134.5 143.0L143.0 143.0L143.0 140.9L150.1 138.0L153.9 135.8L157.3 132.9L156.2 127.9L155.4 126.5M127.1 157.3L134.8 156.5L134.8 153.0L136.7 151.9L136.7 146.7L143.0 146.7L143.0 143.9M143.0 143.9L150.5 148.8L161.9 156.9L165.7 159.5L165.9 161.1L167.6 160.9L171.0 160.3L182.5 151.9M150.5 148.8L147.2 148.8L149.1 166.1L149.5 168.1L141.5 168.3L137.7 167.9L136.4 169.5L132.9 165.9L128.2 166.9M182.5 151.9L177.7 137.6L176.7 133.6L175.4 131.3L173.9 129.1L175.2 126.7L176.0 122.3M177.7 137.6L179.2 135.8L181.5 132.5L181.5 131.0M182.5 151.9L186.7 153.8L190.1 151.9L205.3 160.1L205.3 159.1L207.2 159.1L207.2 155.0L207.2 134.5M207.2 155.0L219.4 155.0L222.8 155.0L229.9 155.0M226.2 139.1L224.9 135.2M186.7 153.8L188.2 157.1L189.3 159.3L189.1 165.3L185.3 170.3L186.5 172.8L187.4 173.6M165.9 161.1L167.6 165.3L166.5 168.1L161.5 169.1L160.0 169.3L158.3 168.9L155.8 170.7L154.3 171.1L151.4 172.6L149.5 175.4L149.1 178.1M160.0 169.3L161.5 172.2L163.8 174.2L164.9 174.2L166.5 175.6M137.7 167.9L136.4 169.5L136.7 171.6L137.7 174.2L133.5 173.6L131.0 173.6L127.6 174.2M137.7 174.2L139.2 175.2L142.5 174.2L144.4 178.5L143.8 179.8L144.4 181.7L143.4 183.5L145.1 186.7L145.3 189.6M131.0 177.1L133.5 175.6L133.5 173.6M134.3 180.8L135.8 179.0L138.3 178.9L139.4 182.1L140.0 181.7L137.7 184.8M140.0 181.7L141.5 181.9L141.7 183.9L143.4 183.5M149.1 178.1L150.6 179.4L154.5 179.8L154.5 182.9L153.5 185.4L154.3 188.3M149.1 178.1L154.3 176.9L159.2 176.7L161.3 176.9M159.2 176.7L160.6 178.9L160.7 182.1L160.9 185.0L161.9 186.4M161.3 176.9L162.6 180.8L162.6 186.0M161.3 176.9L163.8 174.2M166.5 175.6L166.5 178.9L164.7 182.7L164.7 185.8M166.5 175.6L167.4 172.0L172.9 173.0L176.7 173.4L180.6 172.4L185.3 171.6L186.5 172.8M187.4 173.6L186.7 176.3L184.9 178.7L182.8 181.9L181.1 185.2L179.0 184.8L177.3 186.5L176.0 188.8M187.4 173.6L188.4 176.9L189.1 178.9L186.3 179.2L188.6 182.7L189.1 183.7L187.4 186.5L187.4 188.7L189.7 192.1L190.3 193.8M178.3 193.6L181.1 193.8L184.9 193.8L190.3 193.8M189.1 183.7L192.0 183.3L195.8 180.8L199.6 179.6L203.2 176.9L202.5 173.6L201.5 171.5L203.4 167.7L205.3 167.7L205.3 160.1M203.2 176.9L204.9 181.4L207.6 183.3L211.8 188.5M190.3 193.8L191.2 191.3L194.8 189.8L195.0 191.3L194.1 193.8L193.5 199.0L190.5 202.2L190.1 204.9L187.0 207.2L184.6 206.8L182.8 209.1M194.8 189.8L196.7 188.3L202.3 190.2L206.3 188.3L211.8 188.5M181.1 193.8L181.1 196.1L177.9 196.1M184.9 193.8L187.2 195.3L186.1 198.4L187.2 201.6L183.4 202.6L181.7 203.3L182.3 205.1L180.7 205.4M205.3 167.7L204.6 173.2L207.2 178.3L210.1 179.8L212.9 180.2L215.8 179.2L218.3 179.4L221.3 175.6L222.8 174.6L222.5 178.9L224.6 179.8L224.6 181.6M229.9 155.0L230.1 163.1L233.1 163.1M233.1 163.1L230.1 165.1L229.1 169.1L228.9 170.5L231.8 169.3L233.9 169.9L237.3 170.7L240.4 174.0L241.7 173.6M228.9 170.5L228.4 173.6L226.5 175.4L224.9 177.7L224.6 181.6L222.5 183.1L225.3 185.2L226.8 187.7L228.0 189.2M228.0 189.2L229.7 189.6L232.2 191.1L234.8 191.5L237.7 190.6L239.4 190.6M239.4 190.6L241.5 189.2L245.3 188.5L251.0 182.7L249.1 182.7L243.4 180.8L241.5 178.9L241.3 176.9M240.4 174.0L239.2 176.9L241.3 176.9L242.1 175.9M252.8 176.5L252.8 179.8L251.0 182.7M239.4 190.6L237.7 192.7L237.7 198.0L238.8 201.2M211.8 188.5L214.8 189.6L218.3 191.3L220.4 191.1L224.4 190.0L228.0 189.2M224.4 190.0L225.3 192.3L226.3 194.8L224.4 197.4L224.2 199.9M218.3 191.3L219.0 193.8L216.6 196.5L216.0 199.7L216.0 200.7L217.7 200.0L224.2 199.9M224.2 199.9L231.2 203.7L231.4 204.7L234.3 207.0M216.0 200.7L214.8 203.1L215.4 206.4L215.8 209.5L218.1 213.7M214.8 203.1L217.7 202.6L218.3 200.0M215.4 206.4L217.7 204.7L217.7 202.6M182.8 209.1L184.4 209.3L191.2 209.3L192.0 212.3L196.7 212.3L197.7 211.4L201.1 211.9L201.3 216.2L201.9 219.5L205.3 218.9L205.3 222.0L201.5 223.0L201.5 229.3L204.2 232.1M205.3 222.0L208.2 220.4L211.4 220.3L213.7 222.0L216.4 223.8L216.4 221.4L213.9 218.1L214.3 215.2L218.1 213.7M218.1 213.7L222.3 216.0L223.0 216.2L224.4 216.4M223.0 216.2L222.5 220.1L223.0 222.0L221.9 224.2L222.8 224.9L217.1 226.5L217.5 228.1M225.7 220.3L227.8 219.9L231.0 220.4L232.9 219.7L236.6 218.1M225.7 220.3L225.1 221.4L225.5 224.0L228.0 226.7L226.8 231.1L224.9 228.9L225.3 225.9L222.8 224.9M217.5 228.1L222.3 230.3L222.1 232.9L222.5 236.5L221.5 239.5L219.2 241.8M217.5 228.1L214.7 228.9L211.0 232.7L207.8 232.5M182.1 231.3L185.3 230.9L186.3 231.7L194.7 231.7L200.4 232.9L204.2 232.1L207.8 232.5M207.8 232.5L199.6 233.5L199.6 241.0L197.7 241.0L197.7 246.8L197.7 254.5L192.7 255.1L191.0 254.9M207.8 232.5L209.5 235.9L212.4 237.9L215.6 241.4L219.2 241.8M197.7 246.8L199.2 251.2L202.7 249.7L206.7 248.3L208.9 246.6L211.0 244.3L215.6 241.4M219.2 241.8L220.6 246.2L220.6 249.1L219.2 248.9L218.7 251.9L220.8 251.0L222.3 251.2M211.0 257.1L214.1 255.1L215.6 256.9L213.1 259.3L211.6 258.4L211.0 257.1M142.8 109.9L144.2 109.7L147.0 109.9L147.8 110.7L146.5 112.2L146.3 115.5L145.3 115.7L146.3 119.1L145.5 121.6M156.2 106.1L158.3 107.4L160.9 107.6L162.8 108.4L165.7 108.7M164.4 84.5L165.3 85.3L167.6 86.8L168.7 87.7L170.6 89.2L171.8 89.2L175.2 90.6L174.1 94.6M166.5 83.5L167.8 83.5L169.1 83.2L171.0 84.7L171.0 85.3L171.8 86.8L171.2 87.4L171.8 89.2M172.9 77.2L172.9 80.4L171.0 82.2L171.0 84.7M174.1 94.6L171.2 98.5L172.9 99.4L172.2 101.5L172.9 103.9L173.9 105.0M174.1 94.6L176.0 94.3L177.9 94.9L177.7 96.0L179.6 96.6L179.4 97.7L176.7 99.6L172.9 99.4M177.9 94.9L179.4 94.9L182.8 94.6L184.4 94.9L184.2 92.9L185.9 91.2L182.8 87.1L183.4 86.5L186.8 84.7L188.2 84.7M179.6 96.6L182.8 96.3L185.7 97.7L187.2 98.0L190.3 97.1L190.3 96.6L192.2 93.5L191.8 91.8M185.7 97.7L185.5 99.6M186.7 75.6L187.0 78.5L187.6 81.0L188.2 84.7M176.0 72.3L177.5 72.7M188.2 84.7L190.7 85.9L193.3 86.8L195.4 89.2L196.7 89.2L202.7 90.3M185.9 91.2L188.2 90.6L191.8 91.8L195.4 89.2M192.2 93.5L195.2 94.1L198.7 92.1L201.7 92.4L202.7 90.3M190.3 97.1L191.2 97.7L193.1 99.4L195.6 99.4L198.3 98.8L200.0 98.0L201.7 93.8L201.7 92.4M185.5 100.4L188.7 100.4L189.5 98.5L191.2 97.7M195.6 99.4L195.8 102.1L190.1 101.3L189.7 102.6L193.1 107.1L194.8 108.4M195.8 102.1L196.6 103.7L196.4 105.8L198.3 107.6L197.9 108.1L196.4 109.9M198.3 107.6L200.6 108.9L202.3 108.9L202.5 105.8L202.8 103.9L200.4 102.3L198.3 98.8M202.8 103.9L205.3 105.3L209.1 104.7L211.6 104.2L214.1 105.1M197.9 108.1L198.7 111.5L199.6 112.7L199.0 114.5L197.7 115.5M199.6 112.7L203.2 111.5L206.3 111.0L209.3 110.4L209.9 111.5L209.1 112.7M202.3 108.9L203.2 111.5M209.3 110.4L211.0 109.7L212.9 109.7M202.7 90.3L205.3 85.9L204.6 83.2L204.6 79.8L205.1 75.3L204.0 74.3L203.0 74.0L197.3 73.8M201.7 92.4L206.8 94.1L210.3 92.9L213.3 97.7L213.3 100.4L216.2 101.0M210.3 92.9L212.6 92.4L215.2 93.8L216.8 98.0L214.8 98.5L213.3 100.4M204.6 83.2L207.2 81.9L212.9 83.2L217.7 83.5L220.2 81.3L224.0 80.4L227.4 86.5L232.0 88.0L236.0 88.9L235.4 93.8L232.4 96.0M220.2 81.3L219.2 78.2L221.9 76.9L218.3 72.7L218.7 70.0L213.3 68.0L212.4 63.8L211.8 63.1L212.9 56.1M205.1 75.3L208.2 74.6L210.3 69.7L213.3 68.0M199.8 68.3L201.5 67.3L207.2 68.0L210.3 69.7M205.9 62.0L208.2 61.7L211.8 63.1M199.4 71.0L203.0 72.0L203.0 74.0M212.7 52.3L214.8 49.6L219.2 42.7L216.8 39.3L217.7 34.5L216.0 24.7L214.8 20.7L216.8 20.7L213.9 14.6L214.8 13.5L218.5 10.8M213.9 14.6L209.1 10.2L208.7 14.0L204.7 15.6L199.6 13.8L198.8 13.8M205.7 29.9L204.7 27.1L204.4 19.7L198.8 13.8L197.7 17.2L194.1 16.7L191.0 21.7L187.2 28.5L186.3 35.8L182.8 40.2L183.0 47.6L184.0 49.2L183.0 53.5L182.1 56.9L180.7 58.0M145.7 72.0L144.2 73.7L145.7 75.0L147.6 75.0M209.9 111.5L210.3 112.2M228.6 122.7L229.5 122.5L232.0 122.5L235.8 122.5L240.4 121.8L244.9 121.6L243.4 116.2L244.9 115.5M238.7 111.0L240.6 111.0L242.5 112.0L242.8 114.5L244.9 115.5M235.8 106.1L240.6 106.6L243.4 108.1L248.2 109.9L250.7 111.7L252.2 110.2M242.5 112.0L245.3 111.5L248.2 109.9M245.3 111.5L246.3 113.0L248.2 116.0L248.2 117.4L251.0 115.7L252.8 118.7M244.9 115.5L248.2 117.4M228.0 127.7L229.3 128.6L228.0 130.7L227.4 132.0L233.5 130.4L237.7 128.1L238.3 123.2L240.4 121.8M227.4 130.7L226.5 131.1M227.4 132.0L227.2 134.7L226.3 139.1M233.5 130.4L234.3 133.1L230.1 134.7L232.0 136.9L231.0 138.0L228.4 139.8L226.2 139.4M234.3 133.1L236.6 133.8L239.8 135.6L244.8 139.8L248.2 140.0L250.5 137.8L251.0 138.0M248.2 140.0L250.1 141.3L251.8 141.2M244.9 121.6L247.2 124.9L246.1 129.1L247.4 131.3L250.7 135.8L252.2 138.0M256.8 149.6L257.1 149.6M257.9 150.7L259.8 153.2L264.8 153.6L265.7 155.0L264.4 159.1L258.7 161.1L252.6 162.5L248.0 164.7L243.4 164.3L241.9 165.7L241.1 166.3M264.8 153.6L266.3 150.7L267.0 149.0M258.7 161.1L260.8 165.9M252.8 118.7L251.0 117.7L247.2 117.4M262.3 121.1L265.1 119.6L268.6 118.9L272.6 120.8L276.2 123.0L276.0 126.0L274.9 128.8L275.6 134.7L277.3 135.8L275.6 138.3L278.7 139.4L280.2 144.1L276.9 148.4M275.6 138.3L278.7 139.4L285.9 138.3L287.2 135.2L291.6 133.8L293.5 130.4L295.0 128.8L296.0 123.5L301.7 122.0M276.2 123.0L279.0 126.0L282.5 123.7L286.3 121.1L289.1 122.0L292.9 120.6L295.8 119.6L296.0 122.7L301.7 122.0L302.3 121.6M259.6 110.2L262.5 108.9L265.3 111.5L268.2 111.5L271.2 107.6L273.9 109.2L277.5 112.0L282.7 117.4L286.3 121.1M266.3 101.8L266.3 111.5M266.3 101.8L271.2 100.2L275.8 103.7L283.2 105.3L285.5 107.1L285.3 109.7L289.1 112.0L291.0 111.2L294.9 108.9L299.6 108.7L301.0 106.6L304.4 107.4L310.3 107.6L312.4 109.2M289.1 112.0L293.9 114.2L298.7 114.7L300.0 116.0L296.4 116.5L293.9 115.7L291.6 112.7L288.0 116.7L289.9 119.1L289.1 122.0M300.0 116.0L300.4 118.4L302.3 118.4L302.3 121.6M312.4 109.2L308.2 112.2L304.4 113.7L300.0 116.0M248.2 92.4L249.1 90.0L248.8 86.8L252.4 85.9L256.4 82.2L263.4 84.7L269.1 84.7L276.8 83.8L273.7 81.6L276.8 78.5L275.8 75.3L283.8 74.0L291.0 70.7L294.9 74.6L299.6 75.3L305.9 74.0L308.0 77.5L312.2 85.3L318.3 84.7L321.9 88.9L325.9 90.0M252.9 97.7L252.0 95.2L249.1 93.5L248.2 92.4M325.9 90.0L322.9 95.2L317.7 95.8L316.4 100.4L312.0 101.8L313.5 106.6L312.4 109.2M325.9 90.0L327.2 91.8L332.8 101.3L341.3 103.7L343.2 107.9L351.6 107.9L359.6 110.7L369.9 107.6L373.0 105.0L372.8 101.8L380.0 100.7L388.0 97.1L384.0 97.4L380.0 93.8L381.9 88.3M325.9 90.0L330.5 88.0L335.6 85.3L345.0 88.6L346.9 86.2L348.0 81.3L354.3 83.8L354.5 85.9L362.9 86.8L369.1 90.0L375.1 88.9L377.3 86.8L381.9 88.3M381.9 88.3L386.7 87.7L389.7 79.8L395.1 76.9L399.6 79.8L402.7 87.1L408.6 90.9L409.2 94.3L416.2 92.6L413.2 101.5L409.7 104.2L409.3 107.4L408.4 108.7M408.4 108.7L406.7 108.7L403.4 109.7L401.3 110.2L396.4 115.0M399.8 120.4L401.5 118.9L404.2 118.2M302.3 121.6L304.2 123.0L307.8 125.6L309.9 128.4L310.1 132.5L309.5 135.4L314.1 137.6L312.2 140.7M301.7 122.0L304.2 123.0M307.8 125.6L301.3 127.4L300.6 130.9L303.0 132.9L301.3 135.8L298.7 140.2L296.6 142.6L293.7 142.4L292.0 144.5L294.9 150.0L290.7 150.3L289.5 151.5M312.2 140.7L314.1 137.6L319.4 139.6L323.4 142.4L327.4 142.6L327.6 145.8L323.0 145.4L318.3 143.7L312.2 140.7M327.4 142.6L328.8 142.2L329.0 143.9L330.7 142.0L334.1 142.8L334.9 144.8L330.7 145.2L329.0 143.9M334.1 142.8L337.7 140.9L341.3 140.2L345.0 141.8L345.5 142.6M327.6 145.8L327.4 149.0L329.0 153.2L329.1 155.6M327.6 145.8L330.7 146.7L330.7 148.2L335.6 148.8L333.3 151.9L335.4 151.5L336.0 155.2L335.4 157.7M345.5 142.6L342.9 143.9L340.8 146.7L339.8 149.4L337.3 150.9L337.5 155.0L336.0 155.2M345.5 142.6L347.6 143.5L345.5 149.2L348.0 152.5L349.1 153.2L348.6 154.8L352.4 156.3M352.4 156.3L353.5 154.0L354.3 154.2L357.7 154.0L360.2 152.3L362.9 153.4L362.7 155.0L365.1 156.0M352.4 156.3L350.3 158.5L351.2 160.1L352.4 160.1L352.0 164.1L354.1 162.7L357.7 162.5L359.1 164.1L360.8 167.7L360.6 170.1L364.4 169.7M354.3 154.2L355.8 157.5L358.9 158.3L357.7 160.3L360.0 161.9L363.4 167.1L364.4 169.7M350.3 158.5L346.9 159.7L345.1 162.1L347.2 166.3L346.7 168.9L348.6 173.8L349.3 175.4L347.8 178.5M360.6 170.1L355.8 170.7L354.7 171.8L355.6 175.6M364.4 169.7L364.4 174.4L361.1 175.7L361.9 177.3L358.5 178.1M350.3 185.8L352.2 187.1L354.1 186.2M368.4 194.2L369.1 195.7L372.6 196.1L374.9 195.3L377.9 195.3L378.7 192.7L379.8 190.0L383.6 190.0M428.2 203.0L428.2 215.4M396.0 216.0L397.9 215.2L397.7 216.6M0.5 110.4L2.6 107.1L1.5 100.4L-1.4 97.7M17.3 101.8L23.4 101.8L25.5 99.6L26.2 97.1L27.8 95.1L29.7 95.3L30.4 96.0L30.4 99.9L31.2 101.0L32.0 102.1M9.1 106.3L13.3 105.5L14.2 103.9L17.3 101.8M-25.6 146.9L-29.9 143.5L-30.9 141.3M-10.3 163.5L-10.3 167.3L-9.8 167.3M-12.6 163.5L-10.3 163.5M-16.0 170.1L-15.1 167.1L-12.6 166.9L-13.8 164.7L-12.6 163.5M-10.5 170.3L-9.0 171.3L-7.5 171.5L-7.7 172.2M-10.5 170.3L-10.3 169.1L-8.6 167.7M-12.0 171.6L-10.5 170.3M-6.7 173.0L-5.6 171.5L-3.7 171.3L-1.9 169.5L1.1 169.1M-3.7 176.7L-1.8 176.9L0.2 177.1M1.7 182.5L1.7 179.8L2.2 179.6M23.0 159.7L22.8 161.9L22.9 163.0" fill="none" stroke="#c9a9c9" stroke-width="0.6" opacity="0.75" stroke-linejoin="round"/>
<defs><filter id="mb" x="-5%" y="-5%" width="110%" height="110%"><feGaussianBlur stdDeviation="0.35"/></filter></defs>
</svg>
<svg class="abs" style="left:0;top:0" width="469" height="266" viewBox="0 0 469 266" font-family="Liberation Sans, sans-serif" font-weight="bold" font-size="7.7" text-anchor="middle">
<defs><filter id="cb" x="-20%" y="-20%" width="140%" height="140%"><feGaussianBlur stdDeviation="0.55"/></filter></defs>
<circle cx="0.5" cy="178.1" r="9.8" fill="#ffff00" fill-opacity="0.8" filter="url(#cb)"/>
<circle cx="29.2" cy="174.0" r="9.8" fill="#00e400" fill-opacity="0.8" filter="url(#cb)"/>
<circle cx="19.3" cy="188.5" r="9.8" fill="#ffff00" fill-opacity="0.8" filter="url(#cb)"/>
<circle cx="14.1" cy="220.2" r="9.8" fill="#ffff00" fill-opacity="0.8" filter="url(#cb)"/>
<circle cx="49.3" cy="267.8" r="9.8" fill="#00e400" fill-opacity="0.8" filter="url(#cb)"/>
<circle cx="165.6" cy="122.5" r="9.8" fill="#999999" fill-opacity="0.8" filter="url(#cb)"/>
<circle cx="193.3" cy="104.6" r="9.8" fill="#ff0000" fill-opacity="0.8" filter="url(#cb)"/>
<circle cx="200.4" cy="107.9" r="9.8" fill="#ffff00" fill-opacity="0.8" filter="url(#cb)"/>
<circle cx="133.9" cy="179.2" r="9.8" fill="#ffff00" fill-opacity="0.8" filter="url(#cb)"/>
<circle cx="144.8" cy="173.0" r="9.8" fill="#999999" fill-opacity="0.8" filter="url(#cb)"/>
<circle cx="159.6" cy="186.2" r="9.8" fill="#ff7e00" fill-opacity="0.8" filter="url(#cb)"/>
<circle cx="152.5" cy="187.8" r="9.8" fill="#ffff00" fill-opacity="0.8" filter="url(#cb)"/>
<circle cx="188.6" cy="174.5" r="9.8" fill="#ffff00" fill-opacity="0.8" filter="url(#cb)"/>
<circle cx="221.4" cy="167.7" r="9.8" fill="#c4f000" fill-opacity="0.8" filter="url(#cb)"/>
<circle cx="233.5" cy="179.6" r="9.8" fill="#e2dc1c" fill-opacity="0.8" filter="url(#cb)"/>
<circle cx="221.4" cy="196.4" r="9.8" fill="#999999" fill-opacity="0.8" filter="url(#cb)"/>
<circle cx="228.7" cy="133.3" r="9.8" fill="#999999" fill-opacity="0.8" filter="url(#cb)"/>
<circle cx="245.0" cy="130.0" r="9.8" fill="#ffff00" fill-opacity="0.8" filter="url(#cb)"/>
<circle cx="248.2" cy="149.2" r="9.8" fill="#999999" fill-opacity="0.8" filter="url(#cb)"/>
<circle cx="252.0" cy="139.0" r="9.8" fill="#ff7e00" fill-opacity="0.8" filter="url(#cb)"/>
<circle cx="265.0" cy="148.0" r="9.8" fill="#ffff00" fill-opacity="0.8" filter="url(#cb)"/>
<circle cx="256.4" cy="145.3" r="9.8" fill="#ffff00" fill-opacity="0.8" filter="url(#cb)"/>
<circle cx="234.4" cy="155.7" r="9.8" fill="#ffff00" fill-opacity="0.8" filter="url(#cb)"/>
<circle cx="270.5" cy="119.8" r="9.8" fill="#00e400" fill-opacity="0.8" filter="url(#cb)"/>
<circle cx="295.6" cy="83.5" r="9.8" fill="#00e400" fill-opacity="0.8" filter="url(#cb)"/>
<circle cx="292.2" cy="110.7" r="9.8" fill="#ffff00" fill-opacity="0.8" filter="url(#cb)"/>
<circle cx="291.2" cy="117.8" r="9.8" fill="#ffff00" fill-opacity="0.8" filter="url(#cb)"/>
<circle cx="301.8" cy="106.5" r="9.8" fill="#ffff00" fill-opacity="0.8" filter="url(#cb)"/>
<circle cx="306.8" cy="106.3" r="9.8" fill="#ffff00" fill-opacity="0.8" filter="url(#cb)"/>
<circle cx="288.7" cy="127.8" r="9.8" fill="#9a005c" fill-opacity="0.8" filter="url(#cb)"/>
<circle cx="301.7" cy="134.0" r="9.8" fill="#9a005c" fill-opacity="0.8" filter="url(#cb)"/>
<circle cx="300.4" cy="127.1" r="9.8" fill="#ff7e00" fill-opacity="0.8" filter="url(#cb)"/>
<circle cx="307.1" cy="140.5" r="9.8" fill="#ff0000" fill-opacity="0.8" filter="url(#cb)"/>
<circle cx="287.7" cy="148.2" r="9.8" fill="#ff0000" fill-opacity="0.8" filter="url(#cb)"/>
<circle cx="298.9" cy="160.8" r="9.8" fill="#ff0000" fill-opacity="0.8" filter="url(#cb)"/>
<circle cx="313.0" cy="171.9" r="9.8" fill="#00e400" fill-opacity="0.8" filter="url(#cb)"/>
<circle cx="309.4" cy="162.7" r="9.8" fill="#ffff00" fill-opacity="0.8" filter="url(#cb)"/>
<circle cx="311.9" cy="184.2" r="9.8" fill="#00e400" fill-opacity="0.8" filter="url(#cb)"/>
<circle cx="322.0" cy="142.3" r="9.8" fill="#ab8a68" fill-opacity="0.8" filter="url(#cb)"/>
<circle cx="326.9" cy="154.1" r="9.8" fill="#999999" fill-opacity="0.8" filter="url(#cb)"/>
<circle cx="332.3" cy="150.5" r="9.8" fill="#9a005c" fill-opacity="0.8" filter="url(#cb)"/>
<circle cx="342.8" cy="164.8" r="9.8" fill="#ff0000" fill-opacity="0.8" filter="url(#cb)"/>
<circle cx="360.9" cy="156.4" r="9.8" fill="#ffff00" fill-opacity="0.8" filter="url(#cb)"/>
<circle cx="375.4" cy="152.0" r="9.8" fill="#ffff00" fill-opacity="0.8" filter="url(#cb)"/>
<circle cx="354.8" cy="162.3" r="9.8" fill="#ffff00" fill-opacity="0.8" filter="url(#cb)"/>
<circle cx="362.8" cy="176.6" r="9.8" fill="#ffff00" fill-opacity="0.8" filter="url(#cb)"/>
<circle cx="362.7" cy="208.2" r="9.8" fill="#ffff00" fill-opacity="0.8" filter="url(#cb)"/>
<circle cx="362.9" cy="94.2" r="9.8" fill="#00e400" fill-opacity="0.8" filter="url(#cb)"/>
<circle cx="381.4" cy="114.6" r="9.8" fill="#00e400" fill-opacity="0.8" filter="url(#cb)"/>
<circle cx="395.4" cy="110.4" r="9.8" fill="#00e400" fill-opacity="0.8" filter="url(#cb)"/>
<circle cx="391.0" cy="135.3" r="9.8" fill="#ffff00" fill-opacity="0.8" filter="url(#cb)"/>
<g stroke="#fff" stroke-width="1.9" stroke-opacity="0.9" stroke-linejoin="round" paint-order="stroke" fill="#111">
<text transform="translate(0.5,181.0) scale(0.86,1)" font-size="8.8">56</text>
<text transform="translate(29.2,176.9) scale(0.86,1)" font-size="8.8">22</text>
<text transform="translate(19.3,191.4) scale(0.86,1)" font-size="8.8">68</text>
<text transform="translate(14.1,223.1) scale(0.86,1)" font-size="8.8">76</text>
<text transform="translate(49.3,270.7) scale(0.86,1)" font-size="8.8">28</text>
<text transform="translate(165.6,125.5) scale(0.97,1)" font-size="8.8">N/A</text>
<text transform="translate(193.3,107.5) scale(0.86,1)" font-size="8.8">157</text>
<text transform="translate(200.4,110.8) scale(0.86,1)" font-size="8.8">86</text>
<text transform="translate(133.9,182.1) scale(0.86,1)" font-size="8.8">68</text>
<text transform="translate(144.8,176.0) scale(0.97,1)" font-size="8.8">N/A</text>
<text transform="translate(159.6,189.1) scale(0.86,1)" font-size="8.8">105</text>
<text transform="translate(152.5,190.7) scale(0.86,1)" font-size="8.8">77</text>
<text transform="translate(188.6,177.4) scale(0.86,1)" font-size="8.8">94</text>
<text transform="translate(221.4,170.6) scale(0.86,1)" font-size="8.8">63</text>
<text transform="translate(233.5,182.5) scale(0.86,1)" font-size="8.8">151</text>
<text transform="translate(221.4,199.4) scale(0.97,1)" font-size="8.8">N/A</text>
<text transform="translate(228.7,136.3) scale(0.97,1)" font-size="8.8">N/A</text>
<text transform="translate(245.0,132.9) scale(0.86,1)" font-size="8.8">90</text>
<text transform="translate(248.2,152.2) scale(0.97,1)" font-size="8.8">N/A</text>
<text transform="translate(252.0,141.9) scale(0.86,1)" font-size="8.8">121</text>
<text transform="translate(265.0,150.9) scale(0.86,1)" font-size="8.8">80</text>
<text transform="translate(256.4,148.2) scale(0.86,1)" font-size="8.8">90</text>
<text transform="translate(234.4,158.6) scale(0.86,1)" font-size="8.8">83</text>
<text transform="translate(270.5,122.7) scale(0.86,1)" font-size="8.8">20</text>
<text transform="translate(292.2,113.6) scale(0.86,1)" font-size="8.8">80</text>
<text transform="translate(291.2,120.7) scale(0.86,1)" font-size="8.8">74</text>
<text transform="translate(301.8,109.4) scale(0.86,1)" font-size="8.8">73</text>
<text transform="translate(306.8,109.2) scale(0.86,1)" font-size="8.8">54</text>
<text transform="translate(291.0,130.7) scale(0.86,1)" font-size="8.8">211</text>
<text transform="translate(301.7,136.9) scale(0.86,1)" font-size="8.8">448</text>
<text transform="translate(299.5,130.0) scale(0.86,1)" font-size="8.8">116</text>
<text transform="translate(307.1,143.4) scale(0.86,1)" font-size="8.8">159</text>
<text transform="translate(287.7,151.1) scale(0.86,1)" font-size="8.8">181</text>
<text transform="translate(298.9,163.7) scale(0.86,1)" font-size="8.8">160</text>
<text transform="translate(313.0,174.8) scale(0.86,1)" font-size="8.8">48</text>
<text transform="translate(309.4,165.6) scale(0.86,1)" font-size="8.8">66</text>
<text transform="translate(311.9,187.1) scale(0.86,1)" font-size="8.8">7</text>
<text transform="translate(322.0,145.3) scale(0.97,1)" font-size="8.8">N/A</text>
<text transform="translate(326.9,157.1) scale(0.97,1)" font-size="8.8">N/A</text>
<text transform="translate(332.3,153.4) scale(0.86,1)" font-size="8.8">289</text>
<text transform="translate(342.8,167.7) scale(0.86,1)" font-size="8.8">158</text>
<text transform="translate(360.9,159.3) scale(0.86,1)" font-size="8.8">87</text>
<text transform="translate(375.4,154.9) scale(0.86,1)" font-size="8.8">58</text>
<text transform="translate(354.8,165.2) scale(0.86,1)" font-size="8.8">87</text>
<text transform="translate(362.8,179.5) scale(0.86,1)" font-size="8.8">91</text>
<text transform="translate(362.7,211.1) scale(0.86,1)" font-size="8.8">87</text>
<text transform="translate(362.9,97.1) scale(0.86,1)" font-size="8.8">20</text>
<text transform="translate(381.4,117.5) scale(0.86,1)" font-size="8.8">35</text>
<text transform="translate(395.4,113.3) scale(0.86,1)" font-size="8.8">34</text>
<text transform="translate(391.0,138.2) scale(0.86,1)" font-size="8.8">69</text>
</g>
</svg>
<div class="abs" style="left:268.8px;top:1.3px;width:107.2px;height:90px;background:#fff;border-radius:5.5px;box-shadow:0 1.5px 6px rgba(0,0,0,0.38);"></div>
<div class="abs" style="left:295.2px;top:91.3px;width:13px;height:6.5px;overflow:hidden;"><div style="position:absolute;left:2px;top:-4.6px;width:9px;height:9px;background:#fff;transform:rotate(45deg);box-shadow:0 1.5px 6px rgba(0,0,0,0.38);"></div></div>
<div class="abs" style="left:268.8px;top:11.6px;width:107.2px;text-align:center;font-size:9.33px;line-height:10.1px;color:#222;">Bishkek<br>2020-11-19 8:00 AM<br>(LT)</div>
<div class="abs" style="left:279.1px;top:42.0px;width:86.9px;height:38.8px;background:#004a84;"></div>
<div class="abs" style="left:280.0px;top:60.7px;width:53.9px;height:19.2px;background:#fff;"></div>
<div class="abs" style="left:334.8px;top:60.7px;width:30.4px;height:19.2px;background:#ffff00;"></div>
<div class="abs pt" style="left:279.1px;top:42.0px;width:55.2px;line-height:17.6px;color:#fff;font-weight:bold;">Pollutant</div>
<div class="abs pt" style="left:334.3px;top:42.0px;width:31.7px;line-height:17.6px;color:#fff;font-weight:bold;">AQI</div>
<div class="abs pt" style="left:279.1px;top:60.7px;width:55.2px;line-height:18.8px;color:#444;">PM2.5</div>
<div class="abs pt" style="left:334.3px;top:60.7px;width:31.7px;line-height:18.8px;color:#333;">73</div></div>

<div class="abs bar" style="top:4.8px">Select a City</div>
<div class="abs sel" style="top:29px"><span>Bishkek</span><svg width="20" height="8" viewBox="0 0 20 8"><path d="M1.2 0.8 L5.8 5.4 M5.8 0.8 L1.2 5.4" stroke="#999" stroke-width="0.9" fill="none"/><path d="M12.2 2.2 L18 2.2 L15.1 5.4 Z" fill="#888"/></svg></div>
<div class="abs bar" style="top:67.8px">Select a Parameter</div>
<div class="abs sel" style="top:92px"><span>PM2.5</span><svg width="20" height="8" viewBox="0 0 20 8"><path d="M1.2 0.8 L5.8 5.4 M5.8 0.8 L1.2 5.4" stroke="#999" stroke-width="0.9" fill="none"/><path d="M12.2 2.2 L18 2.2 L15.1 5.4 Z" fill="#888"/></svg></div>
<div id="citybox" class="abs"><b>Bishkek</b><svg style="position:absolute;left:192px;top:17px" width="23" height="23" viewBox="0 0 23 23"><rect width="23" height="23" fill="#f1b440"/><circle cx="4.9" cy="18.1" r="2.2" fill="#fff"/><path d="M3 10.2 A9.8 9.8 0 0 1 12.8 20 M3 4.5 A15.5 15.5 0 0 1 18.5 20" stroke="#fff" stroke-width="3.1" fill="none"/></svg></div>
<div id="note" class="abs">Note: Values above 500 are considered Beyond the AQI. Follow recommendations for the Hazardous category. Additional information on reducing exposure to extremely high levels of particle pollution is available <b style="color:#1c2b52"><u>here</u></b>.</div>

<div id="tabs">
<div class="tab" style="left:11px;width:70px;background:#fff;border:1px solid #bbb;border-top:2px solid #004a84;border-bottom:none;height:19px;">AQI</div>
<div class="tab" style="left:85px;width:111px;background:#d3d3d3;color:#777;line-height:23.5px;">Concentration</div>
<div class="tab" style="left:198px;width:92px;background:#d3d3d3;color:#777;line-height:23.5px;">Historical</div>
</div>
<div id="tabline" class="abs"></div>
<div id="learn" class="abs">Learn more about how the Air Quality Index [AQI] is calculated from the EPA <b style="color:#1c2b52"><u>here</u></b>.</div>
<div id="chart" class="abs"></div>
<svg class="abs" style="left:11px;top:371px" width="534" height="257" viewBox="11 371 534 257" font-family="Liberation Sans, sans-serif">
<line x1="61.6" x2="538.4" y1="533.1" y2="533.1" stroke="#e6e6e6" stroke-width="1"/>
<text x="50.2" y="534.9" text-anchor="end" font-size="7.3" font-weight="bold" fill="#222">0</text>
<line x1="61.6" x2="538.4" y1="508.9" y2="508.9" stroke="#e6e6e6" stroke-width="1"/>
<text x="50.2" y="510.7" text-anchor="end" font-size="7.3" font-weight="bold" fill="#222">100</text>
<line x1="61.6" x2="538.4" y1="484.7" y2="484.7" stroke="#e6e6e6" stroke-width="1"/>
<text x="50.2" y="486.5" text-anchor="end" font-size="7.3" font-weight="bold" fill="#222">200</text>
<line x1="61.6" x2="538.4" y1="460.5" y2="460.5" stroke="#e6e6e6" stroke-width="1"/>
<text x="50.2" y="462.3" text-anchor="end" font-size="7.3" font-weight="bold" fill="#222">300</text>
<line x1="61.6" x2="538.4" y1="436.3" y2="436.3" stroke="#e6e6e6" stroke-width="1"/>
<text x="50.2" y="438.1" text-anchor="end" font-size="7.3" font-weight="bold" fill="#222">400</text>
<line x1="61.6" x2="538.4" y1="412.1" y2="412.1" stroke="#e6e6e6" stroke-width="1"/>
<text x="50.2" y="413.9" text-anchor="end" font-size="7.3" font-weight="bold" fill="#222">500</text>
<line x1="61.6" x2="538.4" y1="533.5" y2="533.5" stroke="#ccd6eb" stroke-width="1"/>
<line x1="61.6" x2="61.6" y1="533.5" y2="540.1" stroke="#ccd6eb" stroke-width="0.8"/>
<line x1="81.5" x2="81.5" y1="533.5" y2="540.1" stroke="#ccd6eb" stroke-width="0.8"/>
<line x1="101.3" x2="101.3" y1="533.5" y2="540.1" stroke="#ccd6eb" stroke-width="0.8"/>
<line x1="121.2" x2="121.2" y1="533.5" y2="540.1" stroke="#ccd6eb" stroke-width="0.8"/>
<line x1="141.1" x2="141.1" y1="533.5" y2="540.1" stroke="#ccd6eb" stroke-width="0.8"/>
<line x1="161.0" x2="161.0" y1="533.5" y2="540.1" stroke="#ccd6eb" stroke-width="0.8"/>
<line x1="180.8" x2="180.8" y1="533.5" y2="540.1" stroke="#ccd6eb" stroke-width="0.8"/>
<line x1="200.7" x2="200.7" y1="533.5" y2="540.1" stroke="#ccd6eb" stroke-width="0.8"/>
<line x1="220.6" x2="220.6" y1="533.5" y2="540.1" stroke="#ccd6eb" stroke-width="0.8"/>
<line x1="240.4" x2="240.4" y1="533.5" y2="540.1" stroke="#ccd6eb" stroke-width="0.8"/>
<line x1="260.3" x2="260.3" y1="533.5" y2="540.1" stroke="#ccd6eb" stroke-width="0.8"/>
<line x1="280.2" x2="280.2" y1="533.5" y2="540.1" stroke="#ccd6eb" stroke-width="0.8"/>
<line x1="300.0" x2="300.0" y1="533.5" y2="540.1" stroke="#ccd6eb" stroke-width="0.8"/>
<line x1="319.9" x2="319.9" y1="533.5" y2="540.1" stroke="#ccd6eb" stroke-width="0.8"/>
<line x1="339.8" x2="339.8" y1="533.5" y2="540.1" stroke="#ccd6eb" stroke-width="0.8"/>
<line x1="359.7" x2="359.7" y1="533.5" y2="540.1" stroke="#ccd6eb" stroke-width="0.8"/>
<line x1="379.5" x2="379.5" y1="533.5" y2="540.1" stroke="#ccd6eb" stroke-width="0.8"/>
<line x1="399.4" x2="399.4" y1="533.5" y2="540.1" stroke="#ccd6eb" stroke-width="0.8"/>
<line x1="419.3" x2="419.3" y1="533.5" y2="540.1" stroke="#ccd6eb" stroke-width="0.8"/>
<line x1="439.1" x2="439.1" y1="533.5" y2="540.1" stroke="#ccd6eb" stroke-width="0.8"/>
<line x1="459.0" x2="459.0" y1="533.5" y2="540.1" stroke="#ccd6eb" stroke-width="0.8"/>
<line x1="478.9" x2="478.9" y1="533.5" y2="540.1" stroke="#ccd6eb" stroke-width="0.8"/>
<line x1="498.7" x2="498.7" y1="533.5" y2="540.1" stroke="#ccd6eb" stroke-width="0.8"/>
<line x1="518.6" x2="518.6" y1="533.5" y2="540.1" stroke="#ccd6eb" stroke-width="0.8"/>
<line x1="538.5" x2="538.5" y1="533.5" y2="540.1" stroke="#ccd6eb" stroke-width="0.8"/>
<rect x="66.6" y="512.5" width="9.8" height="20.6" fill="#ffff00" stroke="#4a4020" stroke-width="1"/>
<text transform="translate(73.7,543.1) rotate(-45)" text-anchor="end" font-size="7.6" fill="#666" letter-spacing="0.3">9 AM</text>
<rect x="86.5" y="509.6" width="9.8" height="23.5" fill="#ffff00" stroke="#4a4020" stroke-width="1"/>
<text transform="translate(93.6,543.1) rotate(-45)" text-anchor="end" font-size="7.6" fill="#666" letter-spacing="0.3">10 AM</text>
<rect x="106.4" y="508.7" width="9.8" height="24.4" fill="#ff7e00" stroke="#4a4020" stroke-width="1"/>
<text transform="translate(113.5,543.1) rotate(-45)" text-anchor="end" font-size="7.6" fill="#666" letter-spacing="0.3">11 AM</text>
<rect x="126.2" y="509.9" width="9.8" height="23.2" fill="#ffff00" stroke="#4a4020" stroke-width="1"/>
<text transform="translate(133.3,543.1) rotate(-45)" text-anchor="end" font-size="7.6" fill="#666" letter-spacing="0.3">12 PM</text>
<rect x="146.1" y="506.7" width="9.8" height="26.4" fill="#ff7e00" stroke="#4a4020" stroke-width="1"/>
<text transform="translate(153.2,543.1) rotate(-45)" text-anchor="end" font-size="7.6" fill="#666" letter-spacing="0.3">1 PM</text>
<rect x="166.0" y="505.8" width="9.8" height="27.3" fill="#ff7e00" stroke="#4a4020" stroke-width="1"/>
<text transform="translate(173.1,543.1) rotate(-45)" text-anchor="end" font-size="7.6" fill="#666" letter-spacing="0.3">2 PM</text>
<rect x="185.9" y="506.2" width="9.8" height="26.9" fill="#ff7e00" stroke="#4a4020" stroke-width="1"/>
<text transform="translate(193.0,543.1) rotate(-45)" text-anchor="end" font-size="7.6" fill="#666" letter-spacing="0.3">3 PM</text>
<rect x="205.7" y="504.8" width="9.8" height="28.3" fill="#ff7e00" stroke="#4a4020" stroke-width="1"/>
<text transform="translate(212.8,543.1) rotate(-45)" text-anchor="end" font-size="7.6" fill="#666" letter-spacing="0.3">4 PM</text>
<rect x="225.6" y="500.7" width="9.8" height="32.4" fill="#ff7e00" stroke="#4a4020" stroke-width="1"/>
<text transform="translate(232.7,543.1) rotate(-45)" text-anchor="end" font-size="7.6" fill="#666" letter-spacing="0.3">5 PM</text>
<rect x="245.5" y="496.6" width="9.8" height="36.5" fill="#ff0000" stroke="#4a4020" stroke-width="1"/>
<text transform="translate(252.6,543.1) rotate(-45)" text-anchor="end" font-size="7.6" fill="#666" letter-spacing="0.3">6 PM</text>
<rect x="265.3" y="496.1" width="9.8" height="37.0" fill="#ff0000" stroke="#4a4020" stroke-width="1"/>
<text transform="translate(272.4,543.1) rotate(-45)" text-anchor="end" font-size="7.6" fill="#666" letter-spacing="0.3">7 PM</text>
<rect x="285.2" y="495.6" width="9.8" height="37.5" fill="#ff0000" stroke="#4a4020" stroke-width="1"/>
<text transform="translate(292.3,543.1) rotate(-45)" text-anchor="end" font-size="7.6" fill="#666" letter-spacing="0.3">8 PM</text>
<rect x="305.1" y="495.6" width="9.8" height="37.5" fill="#ff0000" stroke="#4a4020" stroke-width="1"/>
<text transform="translate(312.2,543.1) rotate(-45)" text-anchor="end" font-size="7.6" fill="#666" letter-spacing="0.3">9 PM</text>
<rect x="324.9" y="496.1" width="9.8" height="37.0" fill="#ff0000" stroke="#4a4020" stroke-width="1"/>
<text transform="translate(332.0,543.1) rotate(-45)" text-anchor="end" font-size="7.6" fill="#666" letter-spacing="0.3">10 PM</text>
<rect x="344.8" y="499.9" width="9.8" height="33.2" fill="#ff7e00" stroke="#4a4020" stroke-width="1"/>
<text transform="translate(351.9,543.1) rotate(-45)" text-anchor="end" font-size="7.6" fill="#666" letter-spacing="0.3">11 PM</text>
<rect x="364.7" y="502.6" width="9.8" height="30.5" fill="#ff7e00" stroke="#4a4020" stroke-width="1"/>
<text transform="translate(371.8,543.1) rotate(-45)" text-anchor="end" font-size="7.6" fill="#666" letter-spacing="0.3">Nov 19, 2020 12 AM</text>
<rect x="384.6" y="504.1" width="9.8" height="29.0" fill="#ff7e00" stroke="#4a4020" stroke-width="1"/>
<text transform="translate(391.7,543.1) rotate(-45)" text-anchor="end" font-size="7.6" fill="#666" letter-spacing="0.3">1 AM</text>
<rect x="404.4" y="508.2" width="9.8" height="24.9" fill="#ff7e00" stroke="#4a4020" stroke-width="1"/>
<text transform="translate(411.5,543.1) rotate(-45)" text-anchor="end" font-size="7.6" fill="#666" letter-spacing="0.3">2 AM</text>
<rect x="424.3" y="512.8" width="9.8" height="20.3" fill="#ffff00" stroke="#4a4020" stroke-width="1"/>
<text transform="translate(431.4,543.1) rotate(-45)" text-anchor="end" font-size="7.6" fill="#666" letter-spacing="0.3">3 AM</text>
<rect x="444.2" y="516.6" width="9.8" height="16.5" fill="#ffff00" stroke="#4a4020" stroke-width="1"/>
<text transform="translate(451.3,543.1) rotate(-45)" text-anchor="end" font-size="7.6" fill="#666" letter-spacing="0.3">4 AM</text>
<rect x="464.0" y="517.6" width="9.8" height="15.5" fill="#ffff00" stroke="#4a4020" stroke-width="1"/>
<text transform="translate(471.1,543.1) rotate(-45)" text-anchor="end" font-size="7.6" fill="#666" letter-spacing="0.3">5 AM</text>
<rect x="483.9" y="517.6" width="9.8" height="15.5" fill="#ffff00" stroke="#4a4020" stroke-width="1"/>
<text transform="translate(491.0,543.1) rotate(-45)" text-anchor="end" font-size="7.6" fill="#666" letter-spacing="0.3">6 AM</text>
<rect x="503.8" y="516.6" width="9.8" height="16.5" fill="#ffff00" stroke="#4a4020" stroke-width="1"/>
<text transform="translate(510.9,543.1) rotate(-45)" text-anchor="end" font-size="7.6" fill="#666" letter-spacing="0.3">7 AM</text>
<rect x="523.6" y="515.7" width="9.8" height="17.4" fill="#ffff00" stroke="#4a4020" stroke-width="1"/>
<text transform="translate(530.7,543.1) rotate(-45)" text-anchor="end" font-size="7.6" fill="#666" letter-spacing="0.3">8 AM</text>
<text x="277.8" y="387.3" text-anchor="middle" font-size="12" fill="#333" letter-spacing="0.38">Bishkek – PM2.5</text>
<text transform="translate(30,469) rotate(-90)" text-anchor="middle" font-size="7.3" font-weight="bold" fill="#222">AQI</text>
<rect x="262.9" y="611.1" width="11" height="7.8" fill="#ccc"/>
<text x="277.2" y="618.4" font-size="8.7" font-weight="bold" fill="#222">AQI</text>
</svg>
<div id="cond" class="abs">
<div class="ch"><div style="top:5.6px;font-size:10px">Current Conditions</div><div style="top:20.6px;font-size:8px">observed at</div><div style="top:33.6px;font-size:10px">Nov 19, 2020 8:00 AM (LT)</div></div>
<div class="cy"><div style="top:11.7px">73 AQI</div><div style="top:30.7px">Moderate</div><div style="top:49.6px">PM2.5</div></div>
<div class="hm">Health Message</div>
<div class="ht">The AQI is between 51 and 100. Air quality is<br>acceptable; however, pollution in this range<br>may pose a moderate health concern for a<br>very small number of individuals. People<br>who are unusually sensitive to ozone or<br>particle pollution may experience respiratory<br>symptoms.</div>
</div>
<div class="abs" style="left:556px;top:623px;font-size:7.3px;color:#555;white-space:nowrap;line-height:13px;">Note: Values above 500 are considered Beyond the</div>
</div></body>
</html>
